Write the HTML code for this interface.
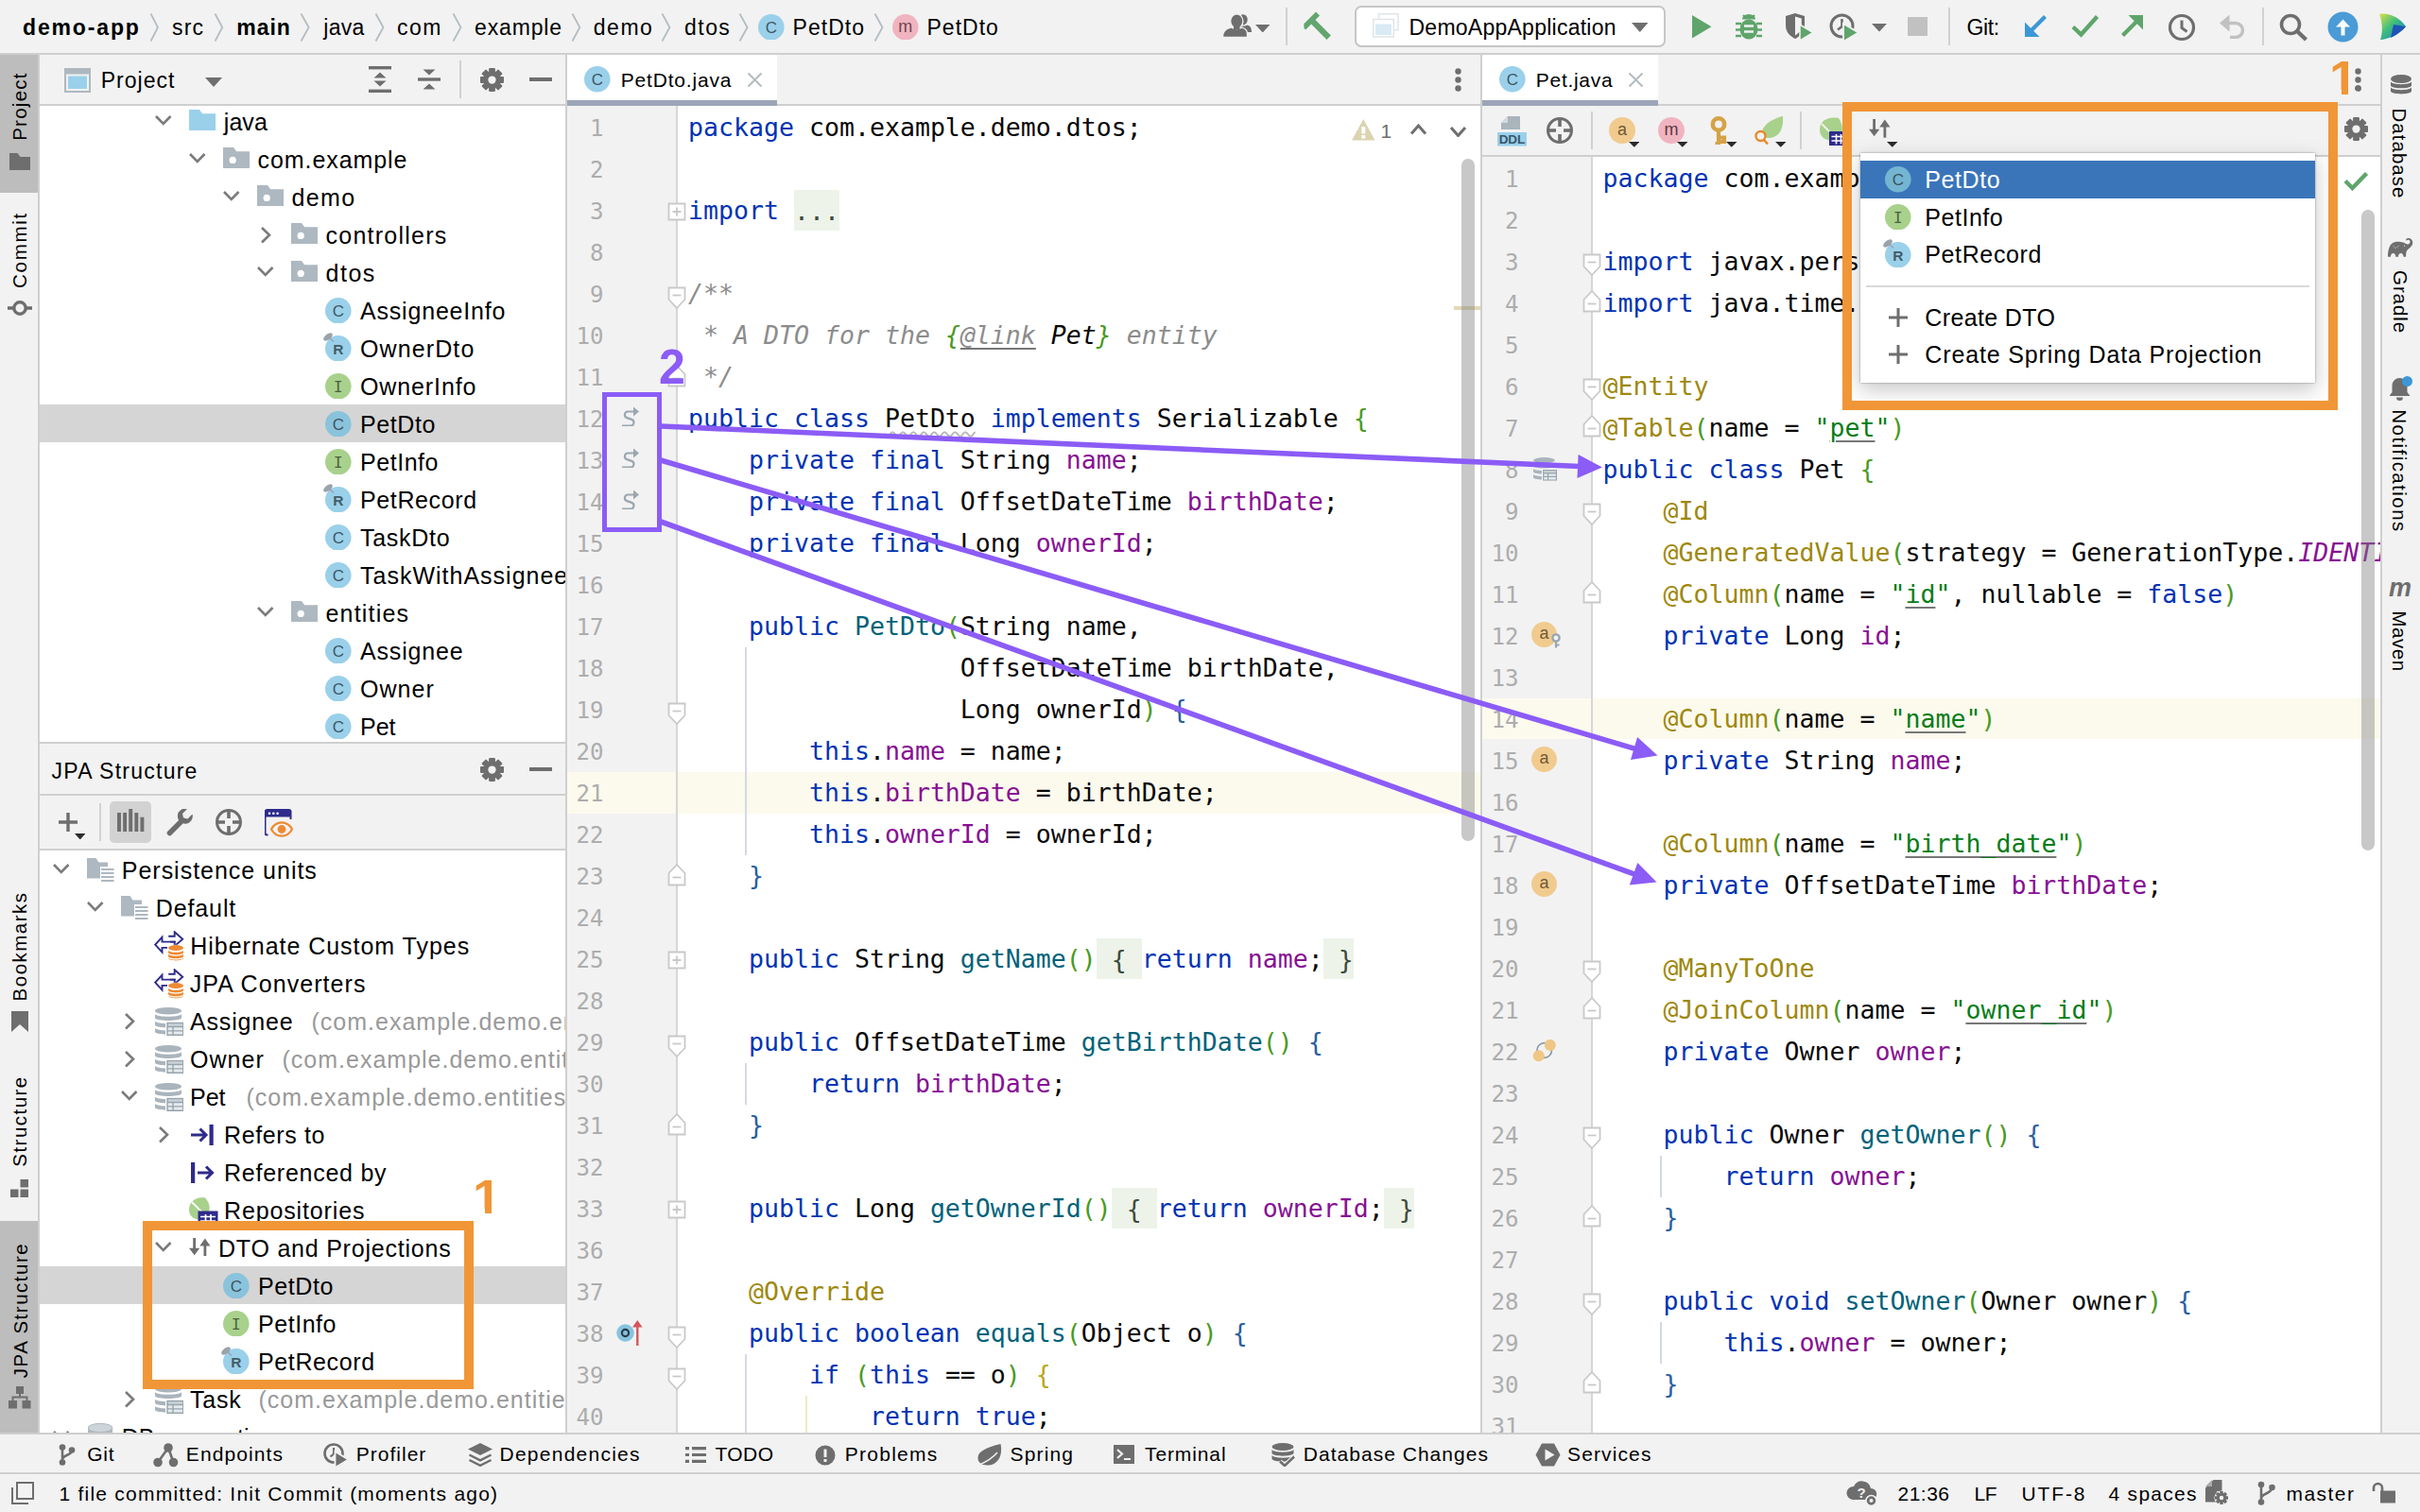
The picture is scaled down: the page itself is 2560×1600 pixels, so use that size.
<!DOCTYPE html><html><head><meta charset="utf-8"><title>IDE</title><style>html,body{margin:0;padding:0}html{background:#f2f2f2}body{width:2560px;height:1600px;overflow:hidden;background:#f2f2f2;position:relative;font-family:"Liberation Sans",sans-serif;font-kerning:normal}body div,body svg{position:absolute;box-sizing:border-box}body div span{position:static}.cl{font-family:"DejaVu Sans Mono","Liberation Mono",monospace;font-size:26.576px;height:44px;line-height:44px;white-space:pre;color:#080808}.ln{font-family:"DejaVu Sans Mono","Liberation Mono",monospace;font-size:24.1px;height:44px;line-height:44px;white-space:pre;color:#adadad;text-align:right;width:60px}.k{color:#0033b3}.a{color:#9e880d}.s{color:#067d17}.f{color:#871094}.m{color:#00627a}.c{color:#8c8c8c;font-style:italic}.g{color:#4a9a1f}.b{color:#265ea0}.y{color:#b9a61c}.u{text-decoration:underline;text-decoration-thickness:1.6px;text-underline-offset:4px;text-decoration-color:#777}.fo{background:#edf3e9;color:#3d4a3d;padding:6.500px 0 6px}</style></head><body><div style="left:0px;top:56px;width:2560px;height:2px;background:#cfcfcf;"></div>
<div style="left:0px;top:58px;width:40px;height:146px;background:#bdbdbd;"></div>
<div style="left:0px;top:1292px;width:40px;height:224px;background:#bdbdbd;"></div>
<div style="left:40px;top:58px;width:2px;height:1458px;background:#cfcfcf;"></div>
<div style="left:42px;top:110px;width:556px;height:2px;background:#cfcfcf;"></div>
<div style="left:42px;top:112px;width:556px;height:674px;background:#fff;"></div>
<div style="left:42px;top:428px;width:556px;height:40px;background:#d5d5d5;"></div>
<div style="left:42px;top:785px;width:556px;height:2px;background:#cfcfcf;"></div>
<div style="left:42px;top:840px;width:556px;height:2px;background:#cfcfcf;"></div>
<div style="left:42px;top:898px;width:556px;height:2px;background:#cfcfcf;"></div>
<div style="left:42px;top:900px;width:556px;height:616px;background:#fff;"></div>
<div style="left:42px;top:1340px;width:556px;height:40px;background:#d5d5d5;"></div>
<div style="left:598px;top:58px;width:2px;height:1458px;background:#cfcfcf;"></div>
<div style="left:600px;top:110px;width:966px;height:2px;background:#cfcfcf;"></div>
<div style="left:600px;top:58px;width:222px;height:48px;background:#fff;"></div>
<div style="left:600px;top:106px;width:222px;height:6px;background:#9ca6b8;"></div>
<div style="left:600px;top:112px;width:116px;height:1404px;background:#f2f2f2;"></div>
<div style="left:716px;top:112px;width:850px;height:1404px;background:#fff;"></div>
<div style="left:600px;top:817.4px;width:966px;height:43.6px;background:#fcfaed;"></div>
<div style="left:715px;top:112px;width:2px;height:1404px;background:#d6d6d6;"></div>
<div style="left:1566px;top:58px;width:2px;height:1458px;background:#cfcfcf;"></div>
<div style="left:1568px;top:110px;width:950px;height:2px;background:#cfcfcf;"></div>
<div style="left:1568px;top:58px;width:186px;height:48px;background:#fff;"></div>
<div style="left:1568px;top:106px;width:186px;height:6px;background:#9ca6b8;"></div>
<div style="left:1568px;top:164px;width:950px;height:2px;background:#cfcfcf;"></div>
<div style="left:1568px;top:166px;width:116px;height:1350px;background:#f2f2f2;"></div>
<div style="left:1684px;top:166px;width:834px;height:1350px;background:#fff;"></div>
<div style="left:1568px;top:738.5px;width:950px;height:43.5px;background:#fcfaed;"></div>
<div style="left:1683px;top:166px;width:2px;height:1350px;background:#d6d6d6;"></div>
<div style="left:2518px;top:58px;width:2px;height:1458px;background:#cfcfcf;"></div>
<div style="left:0px;top:1516px;width:2560px;height:2px;background:#cfcfcf;"></div>
<div style="left:0px;top:1558px;width:2560px;height:2px;background:#cfcfcf;"></div>
<div style="left:600px;top:112px;width:966px;height:1404px;overflow:hidden">
<div class="ln" style="left:-21.5px;top:2.2px">1</div>
<div class="cl" style="left:128px;top:1.2px"><span class="k">package</span> com.example.demo.dtos;</div>
<div class="ln" style="left:-21.5px;top:46.2px">2</div>
<div class="ln" style="left:-21.5px;top:90.2px">3</div>
<div class="cl" style="left:128px;top:89.2px"><span class="k">import</span> <span class="fo">...</span></div>
<div class="ln" style="left:-21.5px;top:134.2px">8</div>
<div class="ln" style="left:-21.5px;top:178.2px">9</div>
<div class="cl" style="left:128px;top:177.2px"><span class="c">/**</span></div>
<div class="ln" style="left:-21.5px;top:222.2px">10</div>
<div class="cl" style="left:128px;top:221.2px"><span class="c"> * A DTO for the </span><span class="g" style="font-style:italic">{</span><span class="c u">@link</span><span style="font-style:italic"> Pet</span><span class="g" style="font-style:italic">}</span><span class="c"> entity</span></div>
<div class="ln" style="left:-21.5px;top:266.2px">11</div>
<div class="cl" style="left:128px;top:265.2px"><span class="c"> */</span></div>
<div class="ln" style="left:-21.5px;top:310.2px">12</div>
<div class="cl" style="left:128px;top:309.2px"><span class="k">public class</span> <span style="text-decoration:underline wavy #b8b8b8 1.5px;text-underline-offset:3.5px">PetDto</span> <span class="k">implements</span> Serializable <span class="g">{</span></div>
<div class="ln" style="left:-21.5px;top:354.2px">13</div>
<div class="cl" style="left:128px;top:353.2px">    <span class="k">private final</span> String <span class="f">name</span>;</div>
<div class="ln" style="left:-21.5px;top:398.2px">14</div>
<div class="cl" style="left:128px;top:397.2px">    <span class="k">private final</span> OffsetDateTime <span class="f">birthDate</span>;</div>
<div class="ln" style="left:-21.5px;top:442.2px">15</div>
<div class="cl" style="left:128px;top:441.2px">    <span class="k">private final</span> Long <span class="f">ownerId</span>;</div>
<div class="ln" style="left:-21.5px;top:486.2px">16</div>
<div class="ln" style="left:-21.5px;top:530.2px">17</div>
<div class="cl" style="left:128px;top:529.2px">    <span class="k">public</span> <span class="m">PetDto</span><span class="g">(</span>String name,</div>
<div class="ln" style="left:-21.5px;top:574.2px">18</div>
<div class="cl" style="left:128px;top:573.2px">                  OffsetDateTime birthDate,</div>
<div class="ln" style="left:-21.5px;top:618.2px">19</div>
<div class="cl" style="left:128px;top:617.2px">                  Long ownerId<span class="g">)</span> <span class="b">{</span></div>
<div class="ln" style="left:-21.5px;top:662.2px">20</div>
<div class="cl" style="left:128px;top:661.2px">        <span class="k">this</span>.<span class="f">name</span> = name;</div>
<div class="ln" style="left:-21.5px;top:706.2px">21</div>
<div class="cl" style="left:128px;top:705.2px">        <span class="k">this</span>.<span class="f">birthDate</span> = birthDate;</div>
<div class="ln" style="left:-21.5px;top:750.2px">22</div>
<div class="cl" style="left:128px;top:749.2px">        <span class="k">this</span>.<span class="f">ownerId</span> = ownerId;</div>
<div class="ln" style="left:-21.5px;top:794.2px">23</div>
<div class="cl" style="left:128px;top:793.2px">    <span class="b">}</span></div>
<div class="ln" style="left:-21.5px;top:838.2px">24</div>
<div class="ln" style="left:-21.5px;top:882.2px">25</div>
<div class="cl" style="left:128px;top:881.2px">    <span class="k">public</span> String <span class="m">getName</span><span class="g">()</span><span class="fo"> { </span><span class="k">return</span> <span class="f">name</span>;<span class="fo"> }</span></div>
<div class="ln" style="left:-21.5px;top:926.2px">28</div>
<div class="ln" style="left:-21.5px;top:970.2px">29</div>
<div class="cl" style="left:128px;top:969.2px">    <span class="k">public</span> OffsetDateTime <span class="m">getBirthDate</span><span class="g">()</span> <span class="b">{</span></div>
<div class="ln" style="left:-21.5px;top:1014.2px">30</div>
<div class="cl" style="left:128px;top:1013.2px">        <span class="k">return</span> <span class="f">birthDate</span>;</div>
<div class="ln" style="left:-21.5px;top:1058.2px">31</div>
<div class="cl" style="left:128px;top:1057.2px">    <span class="b">}</span></div>
<div class="ln" style="left:-21.5px;top:1102.2px">32</div>
<div class="ln" style="left:-21.5px;top:1146.2px">33</div>
<div class="cl" style="left:128px;top:1145.2px">    <span class="k">public</span> Long <span class="m">getOwnerId</span><span class="g">()</span><span class="fo"> { </span><span class="k">return</span> <span class="f">ownerId</span>;<span class="fo"> }</span></div>
<div class="ln" style="left:-21.5px;top:1190.2px">36</div>
<div class="ln" style="left:-21.5px;top:1234.2px">37</div>
<div class="cl" style="left:128px;top:1233.2px">    <span class="a">@Override</span></div>
<div class="ln" style="left:-21.5px;top:1278.2px">38</div>
<div class="cl" style="left:128px;top:1277.2px">    <span class="k">public boolean</span> <span class="m">equals</span><span class="g">(</span>Object o<span class="g">)</span> <span class="b">{</span></div>
<div class="ln" style="left:-21.5px;top:1322.2px">39</div>
<div class="cl" style="left:128px;top:1321.2px">        <span class="k">if</span> <span class="g">(</span><span class="k">this</span> == o<span class="g">)</span> <span class="y">{</span></div>
<div class="ln" style="left:-21.5px;top:1366.2px">40</div>
<div class="cl" style="left:128px;top:1365.2px">            <span class="k">return true</span>;</div>
<div style="left:187.6px;top:573.4px;width:2px;height:220px;background:#d3d9e6"></div>
<div style="left:187.6px;top:1013.4px;width:2px;height:44px;background:#d3d9e6"></div>
<div style="left:187.6px;top:1321.4px;width:2px;height:88px;background:#d3d9e6"></div>
<div style="left:252px;top:1365.4px;width:2px;height:44px;background:#efe9c2"></div>
</div>
<div style="left:1568px;top:166px;width:950px;height:1350px;overflow:hidden">
<div class="ln" style="left:-21.5px;top:1.8px">1</div>
<div class="cl" style="left:127.6px;top:0.8px"><span class="k">package</span> com.example.demo.entities;</div>
<div class="ln" style="left:-21.5px;top:45.8px">2</div>
<div class="ln" style="left:-21.5px;top:89.8px">3</div>
<div class="cl" style="left:127.6px;top:88.8px"><span class="k">import</span> javax.persistence.*;</div>
<div class="ln" style="left:-21.5px;top:133.8px">4</div>
<div class="cl" style="left:127.6px;top:132.8px"><span class="k">import</span> java.time.OffsetDateTime;</div>
<div class="ln" style="left:-21.5px;top:177.8px">5</div>
<div class="ln" style="left:-21.5px;top:221.8px">6</div>
<div class="cl" style="left:127.6px;top:220.8px"><span class="a">@Entity</span></div>
<div class="ln" style="left:-21.5px;top:265.8px">7</div>
<div class="cl" style="left:127.6px;top:264.8px"><span class="a">@Table</span><span class="g">(</span>name = <span class="s">"<span class="u">pet</span>"</span><span class="g">)</span></div>
<div class="ln" style="left:-21.5px;top:309.8px">8</div>
<div class="cl" style="left:127.6px;top:308.8px"><span class="k">public class</span> Pet <span class="g">{</span></div>
<div class="ln" style="left:-21.5px;top:353.8px">9</div>
<div class="cl" style="left:127.6px;top:352.8px">    <span class="a">@Id</span></div>
<div class="ln" style="left:-21.5px;top:397.8px">10</div>
<div class="cl" style="left:127.6px;top:396.8px">    <span class="a">@GeneratedValue</span><span class="g">(</span>strategy = GenerationType.<span class="f" style="font-style:italic">IDENTITY</span><span class="g">)</span></div>
<div class="ln" style="left:-21.5px;top:441.8px">11</div>
<div class="cl" style="left:127.6px;top:440.8px">    <span class="a">@Column</span><span class="g">(</span>name = <span class="s">"<span class="u">id</span>"</span>, nullable = <span class="k">false</span><span class="g">)</span></div>
<div class="ln" style="left:-21.5px;top:485.8px">12</div>
<div class="cl" style="left:127.6px;top:484.8px">    <span class="k">private</span> Long <span class="f">id</span>;</div>
<div class="ln" style="left:-21.5px;top:529.8px">13</div>
<div class="ln" style="left:-21.5px;top:573.8px">14</div>
<div class="cl" style="left:127.6px;top:572.8px">    <span class="a">@Column</span><span class="g">(</span>name = <span class="s">"<span class="u">name</span>"</span><span class="g">)</span></div>
<div class="ln" style="left:-21.5px;top:617.8px">15</div>
<div class="cl" style="left:127.6px;top:616.8px">    <span class="k">private</span> String <span class="f">name</span>;</div>
<div class="ln" style="left:-21.5px;top:661.8px">16</div>
<div class="ln" style="left:-21.5px;top:705.8px">17</div>
<div class="cl" style="left:127.6px;top:704.8px">    <span class="a">@Column</span><span class="g">(</span>name = <span class="s">"<span class="u">birth_date</span>"</span><span class="g">)</span></div>
<div class="ln" style="left:-21.5px;top:749.8px">18</div>
<div class="cl" style="left:127.6px;top:748.8px">    <span class="k">private</span> OffsetDateTime <span class="f">birthDate</span>;</div>
<div class="ln" style="left:-21.5px;top:793.8px">19</div>
<div class="ln" style="left:-21.5px;top:837.8px">20</div>
<div class="cl" style="left:127.6px;top:836.8px">    <span class="a">@ManyToOne</span></div>
<div class="ln" style="left:-21.5px;top:881.8px">21</div>
<div class="cl" style="left:127.6px;top:880.8px">    <span class="a">@JoinColumn</span><span class="g">(</span>name = <span class="s">"<span class="u">owner_id</span>"</span><span class="g">)</span></div>
<div class="ln" style="left:-21.5px;top:925.8px">22</div>
<div class="cl" style="left:127.6px;top:924.8px">    <span class="k">private</span> Owner <span class="f">owner</span>;</div>
<div class="ln" style="left:-21.5px;top:969.8px">23</div>
<div class="ln" style="left:-21.5px;top:1013.8px">24</div>
<div class="cl" style="left:127.6px;top:1012.8px">    <span class="k">public</span> Owner <span class="m">getOwner</span><span class="g">()</span> <span class="b">{</span></div>
<div class="ln" style="left:-21.5px;top:1057.8px">25</div>
<div class="cl" style="left:127.6px;top:1056.8px">        <span class="k">return</span> <span class="f">owner</span>;</div>
<div class="ln" style="left:-21.5px;top:1101.8px">26</div>
<div class="cl" style="left:127.6px;top:1100.8px">    <span class="b">}</span></div>
<div class="ln" style="left:-21.5px;top:1145.8px">27</div>
<div class="ln" style="left:-21.5px;top:1189.8px">28</div>
<div class="cl" style="left:127.6px;top:1188.8px">    <span class="k">public void</span> <span class="m">setOwner</span><span class="g">(</span>Owner owner<span class="g">)</span> <span class="b">{</span></div>
<div class="ln" style="left:-21.5px;top:1233.8px">29</div>
<div class="cl" style="left:127.6px;top:1232.8px">        <span class="k">this</span>.<span class="f">owner</span> = owner;</div>
<div class="ln" style="left:-21.5px;top:1277.8px">30</div>
<div class="cl" style="left:127.6px;top:1276.8px">    <span class="b">}</span></div>
<div class="ln" style="left:-21.5px;top:1321.8px">31</div>
<div style="left:187.8px;top:1057px;width:2px;height:44px;background:#d3d9e6"></div>
<div style="left:187.8px;top:1233px;width:2px;height:44px;background:#d3d9e6"></div>
</div>
<svg style="left:706px;top:214.4px;" width="20" height="20" viewBox="0 0 20 20"><path d="M1.5 1.5h17v17h-17z" fill="#fff" stroke="#c9c9c9" stroke-width="1.8"/><path d="M5.5 10h9M10 5.5v9" stroke="#c9c9c9" stroke-width="1.8"/></svg>
<svg style="left:706px;top:1006.4px;" width="20" height="20" viewBox="0 0 20 20"><path d="M1.5 1.5h17v17h-17z" fill="#fff" stroke="#c9c9c9" stroke-width="1.8"/><path d="M5.5 10h9M10 5.5v9" stroke="#c9c9c9" stroke-width="1.8"/></svg>
<svg style="left:706px;top:1270.4px;" width="20" height="20" viewBox="0 0 20 20"><path d="M1.5 1.5h17v17h-17z" fill="#fff" stroke="#c9c9c9" stroke-width="1.8"/><path d="M5.5 10h9M10 5.5v9" stroke="#c9c9c9" stroke-width="1.8"/></svg>
<svg style="left:706px;top:302.7px;" width="20" height="25" viewBox="0 0 20 25"><path d="M1.5 1.5h17v12.500l-8.500 9l-8.500-9z" fill="#fff" stroke="#c9c9c9" stroke-width="1.8"/><path d="M5.5 9.5h9" stroke="#c9c9c9" stroke-width="1.8"/></svg>
<svg style="left:706px;top:742.7px;" width="20" height="25" viewBox="0 0 20 25"><path d="M1.5 1.5h17v12.500l-8.500 9l-8.500-9z" fill="#fff" stroke="#c9c9c9" stroke-width="1.8"/><path d="M5.5 9.5h9" stroke="#c9c9c9" stroke-width="1.8"/></svg>
<svg style="left:706px;top:1094.7px;" width="20" height="25" viewBox="0 0 20 25"><path d="M1.5 1.5h17v12.500l-8.500 9l-8.500-9z" fill="#fff" stroke="#c9c9c9" stroke-width="1.8"/><path d="M5.5 9.5h9" stroke="#c9c9c9" stroke-width="1.8"/></svg>
<svg style="left:706px;top:1402.7px;" width="20" height="25" viewBox="0 0 20 25"><path d="M1.5 1.5h17v12.500l-8.500 9l-8.500-9z" fill="#fff" stroke="#c9c9c9" stroke-width="1.8"/><path d="M5.5 9.5h9" stroke="#c9c9c9" stroke-width="1.8"/></svg>
<svg style="left:706px;top:1446.7px;" width="20" height="25" viewBox="0 0 20 25"><path d="M1.5 1.5h17v12.500l-8.500 9l-8.500-9z" fill="#fff" stroke="#c9c9c9" stroke-width="1.8"/><path d="M5.5 9.5h9" stroke="#c9c9c9" stroke-width="1.8"/></svg>
<svg style="left:706px;top:384.6px;" width="20" height="25" viewBox="0 0 20 25"><path d="M1.5 23.5h17v-12.500l-8.500-9l-8.500 9z" fill="#fff" stroke="#c9c9c9" stroke-width="1.8"/><path d="M5.5 15.500h9" stroke="#c9c9c9" stroke-width="1.8"/></svg>
<svg style="left:706px;top:912.6px;" width="20" height="25" viewBox="0 0 20 25"><path d="M1.5 23.5h17v-12.500l-8.500-9l-8.500 9z" fill="#fff" stroke="#c9c9c9" stroke-width="1.8"/><path d="M5.5 15.500h9" stroke="#c9c9c9" stroke-width="1.8"/></svg>
<svg style="left:706px;top:1176.6px;" width="20" height="25" viewBox="0 0 20 25"><path d="M1.5 23.5h17v-12.500l-8.500-9l-8.500 9z" fill="#fff" stroke="#c9c9c9" stroke-width="1.8"/><path d="M5.5 15.500h9" stroke="#c9c9c9" stroke-width="1.8"/></svg>
<svg style="left:1674px;top:268.3px;" width="20" height="25" viewBox="0 0 20 25"><path d="M1.5 1.5h17v12.500l-8.500 9l-8.500-9z" fill="#fff" stroke="#c9c9c9" stroke-width="1.8"/><path d="M5.5 9.5h9" stroke="#c9c9c9" stroke-width="1.8"/></svg>
<svg style="left:1674px;top:400.3px;" width="20" height="25" viewBox="0 0 20 25"><path d="M1.5 1.5h17v12.500l-8.500 9l-8.500-9z" fill="#fff" stroke="#c9c9c9" stroke-width="1.8"/><path d="M5.5 9.5h9" stroke="#c9c9c9" stroke-width="1.8"/></svg>
<svg style="left:1674px;top:532.3px;" width="20" height="25" viewBox="0 0 20 25"><path d="M1.5 1.5h17v12.500l-8.500 9l-8.500-9z" fill="#fff" stroke="#c9c9c9" stroke-width="1.8"/><path d="M5.5 9.5h9" stroke="#c9c9c9" stroke-width="1.8"/></svg>
<svg style="left:1674px;top:1016.3px;" width="20" height="25" viewBox="0 0 20 25"><path d="M1.5 1.5h17v12.500l-8.500 9l-8.500-9z" fill="#fff" stroke="#c9c9c9" stroke-width="1.8"/><path d="M5.5 9.5h9" stroke="#c9c9c9" stroke-width="1.8"/></svg>
<svg style="left:1674px;top:1192.3px;" width="20" height="25" viewBox="0 0 20 25"><path d="M1.5 1.5h17v12.500l-8.500 9l-8.500-9z" fill="#fff" stroke="#c9c9c9" stroke-width="1.8"/><path d="M5.5 9.5h9" stroke="#c9c9c9" stroke-width="1.8"/></svg>
<svg style="left:1674px;top:1368.3px;" width="20" height="25" viewBox="0 0 20 25"><path d="M1.5 1.5h17v12.500l-8.500 9l-8.500-9z" fill="#fff" stroke="#c9c9c9" stroke-width="1.8"/><path d="M5.5 9.5h9" stroke="#c9c9c9" stroke-width="1.8"/></svg>
<svg style="left:1674px;top:306.2px;" width="20" height="25" viewBox="0 0 20 25"><path d="M1.5 23.5h17v-12.500l-8.500-9l-8.500 9z" fill="#fff" stroke="#c9c9c9" stroke-width="1.8"/><path d="M5.5 15.500h9" stroke="#c9c9c9" stroke-width="1.8"/></svg>
<svg style="left:1674px;top:438.2px;" width="20" height="25" viewBox="0 0 20 25"><path d="M1.5 23.5h17v-12.500l-8.500-9l-8.500 9z" fill="#fff" stroke="#c9c9c9" stroke-width="1.8"/><path d="M5.5 15.500h9" stroke="#c9c9c9" stroke-width="1.8"/></svg>
<svg style="left:1674px;top:614.2px;" width="20" height="25" viewBox="0 0 20 25"><path d="M1.5 23.5h17v-12.500l-8.500-9l-8.500 9z" fill="#fff" stroke="#c9c9c9" stroke-width="1.8"/><path d="M5.5 15.500h9" stroke="#c9c9c9" stroke-width="1.8"/></svg>
<svg style="left:1674px;top:1054.2px;" width="20" height="25" viewBox="0 0 20 25"><path d="M1.5 23.5h17v-12.500l-8.500-9l-8.500 9z" fill="#fff" stroke="#c9c9c9" stroke-width="1.8"/><path d="M5.5 15.500h9" stroke="#c9c9c9" stroke-width="1.8"/></svg>
<svg style="left:1674px;top:1274.2px;" width="20" height="25" viewBox="0 0 20 25"><path d="M1.5 23.5h17v-12.500l-8.500-9l-8.500 9z" fill="#fff" stroke="#c9c9c9" stroke-width="1.8"/><path d="M5.5 15.500h9" stroke="#c9c9c9" stroke-width="1.8"/></svg>
<svg style="left:1674px;top:1450.2px;" width="20" height="25" viewBox="0 0 20 25"><path d="M1.5 23.5h17v-12.500l-8.500-9l-8.500 9z" fill="#fff" stroke="#c9c9c9" stroke-width="1.8"/><path d="M5.5 15.500h9" stroke="#c9c9c9" stroke-width="1.8"/></svg>
<svg style="left:657px;top:429.4px;" width="20" height="22" viewBox="0 0 20 22"><path d="M13.500 6.500H7.200a3.400 3.400 0 0 0-1 6.600l5 1.800a3.400 3.400 0 0 1-1 6.600H1" fill="none" stroke="#9aa7b0" stroke-width="2.200"/><path d="M13 1.500l6 5l-6 5z" fill="#9aa7b0"/></svg>
<svg style="left:657px;top:473.4px;" width="20" height="22" viewBox="0 0 20 22"><path d="M13.500 6.500H7.200a3.400 3.400 0 0 0-1 6.600l5 1.800a3.400 3.400 0 0 1-1 6.600H1" fill="none" stroke="#9aa7b0" stroke-width="2.200"/><path d="M13 1.500l6 5l-6 5z" fill="#9aa7b0"/></svg>
<svg style="left:657px;top:517.4px;" width="20" height="22" viewBox="0 0 20 22"><path d="M13.500 6.500H7.200a3.400 3.400 0 0 0-1 6.600l5 1.800a3.400 3.400 0 0 1-1 6.600H1" fill="none" stroke="#9aa7b0" stroke-width="2.200"/><path d="M13 1.500l6 5l-6 5z" fill="#9aa7b0"/></svg>
<svg style="left:651.8px;top:1395.9px;" width="30" height="28" viewBox="0 0 30 28"><circle cx="9.500" cy="14.500" r="9.300" fill="#85c3e0"/><circle cx="9.500" cy="14.500" r="3.600" fill="none" stroke="#2b3b46" stroke-width="2.200"/><path d="M22.300 28V7" stroke="#d4565c" stroke-width="2.400"/><path d="M17 8.500l5.300-7.500l5.300 7.500z" fill="#d4565c"/></svg>
<svg style="left:1622px;top:484.3px;" width="25.01" height="24.6" viewBox="0 0 30.5 30" preserveAspectRatio="none"><ellipse cx="14" cy="3.800" rx="14" ry="3.800" fill="#aab4bc"/><path d="M0 7.300c2 3.300 26 3.300 28 0v4.200c-2 3.300-26 3.300-28 0zM0 14.700c2 3.300 26 3.300 28 0v4.200c-2 3.300-26 3.300-28 0zM0 22.100c2 3.300 26 3.300 28 0v4.200c-2 3.300-26 3.300-28 0z" fill="#aab4bc"/><rect x="11" y="14.600" width="19.500" height="15.400" fill="#fff"/><rect x="12.300" y="15.800" width="18.200" height="14.200" fill="#97a4ad"/><rect x="13.700" y="17.200" width="15.400" height="2.600" fill="#c9d1d6"/><path d="M13.700 21.200h4.600v3h-4.600zM19.700 21.200h9.400v3h-9.400zM13.700 25.600h4.600v3h-4.600zM19.700 25.600h9.400v3h-9.400z" fill="#e6eaed"/></svg>
<svg style="left:1620px;top:658px;" width="27" height="27" viewBox="0 0 27 27"><circle cx="13.5" cy="13.5" r="13.5" fill="#f1cb8e"/><text x="13.5" y="12.3" text-anchor="middle" dominant-baseline="central" font-family='"Liberation Sans",sans-serif' font-size="18" font-weight="400" fill="#5c4a2c" fill-opacity="0.9">a</text></svg>
<svg style="left:1639.5px;top:669.5px;" width="12" height="16" viewBox="0 0 12 16"><circle cx="6" cy="5" r="3.600" fill="#f2f2f2" stroke="#9aa7b0" stroke-width="2.400"/><path d="M6 8.500v7M6 12.500h3.500" stroke="#9aa7b0" stroke-width="2.200" fill="none"/></svg>
<svg style="left:1620px;top:790px;" width="27" height="27" viewBox="0 0 27 27"><circle cx="13.5" cy="13.5" r="13.5" fill="#f1cb8e"/><text x="13.5" y="12.3" text-anchor="middle" dominant-baseline="central" font-family='"Liberation Sans",sans-serif' font-size="18" font-weight="400" fill="#5c4a2c" fill-opacity="0.9">a</text></svg>
<svg style="left:1620px;top:922px;" width="27" height="27" viewBox="0 0 27 27"><circle cx="13.5" cy="13.5" r="13.5" fill="#f1cb8e"/><text x="13.5" y="12.3" text-anchor="middle" dominant-baseline="central" font-family='"Liberation Sans",sans-serif' font-size="18" font-weight="400" fill="#5c4a2c" fill-opacity="0.9">a</text></svg>
<svg style="left:1620px;top:1100px;" width="28" height="26" viewBox="0 0 28 26"><circle cx="13.700" cy="11.500" r="7.800" fill="none" stroke="#8a9aa5" stroke-width="1.700"/><circle cx="19.800" cy="5.900" r="6" fill="#f0c684"/><circle cx="7.700" cy="17.300" r="6" fill="#f0c684"/></svg>
<div style="left:24.00px;top:12.90px;height:32px;line-height:32px;font-size:23px;color:#000;white-space:pre;letter-spacing:1.86px;font-weight:700;">demo-app</div>
<svg style="left:157.5px;top:13px;" width="11" height="32" viewBox="0 0 11 32"><path d="M1.5 1.500L9 16L1.500 30.500" fill="none" stroke="#b4bcc1" stroke-width="1.8"/></svg>
<div style="left:182.00px;top:12.90px;height:32px;line-height:32px;font-size:23px;color:#000;white-space:pre;letter-spacing:1.18px;">src</div>
<svg style="left:226px;top:13px;" width="11.2" height="32" viewBox="0 0 11.2 32"><path d="M1.5 1.500L9.2 16L1.500 30.500" fill="none" stroke="#b4bcc1" stroke-width="1.8"/></svg>
<div style="left:250.30px;top:12.90px;height:32px;line-height:32px;font-size:23px;color:#000;white-space:pre;letter-spacing:0.95px;font-weight:700;">main</div>
<svg style="left:317.4px;top:13px;" width="11.6" height="32" viewBox="0 0 11.6 32"><path d="M1.5 1.500L9.6 16L1.500 30.500" fill="none" stroke="#b4bcc1" stroke-width="1.8"/></svg>
<div style="left:342.25px;top:12.90px;height:32px;line-height:32px;font-size:23px;color:#000;white-space:pre;letter-spacing:0.32px;">java</div>
<svg style="left:395.5px;top:13px;" width="11.5" height="32" viewBox="0 0 11.5 32"><path d="M1.5 1.500L9.5 16L1.500 30.500" fill="none" stroke="#b4bcc1" stroke-width="1.8"/></svg>
<div style="left:420.10px;top:12.90px;height:32px;line-height:32px;font-size:23px;color:#000;white-space:pre;letter-spacing:1.45px;">com</div>
<svg style="left:477.5px;top:13px;" width="11.5" height="32" viewBox="0 0 11.5 32"><path d="M1.5 1.500L9.5 16L1.500 30.500" fill="none" stroke="#b4bcc1" stroke-width="1.8"/></svg>
<div style="left:502.10px;top:12.90px;height:32px;line-height:32px;font-size:23px;color:#000;white-space:pre;letter-spacing:0.83px;">example</div>
<svg style="left:603.5px;top:13px;" width="11.3" height="32" viewBox="0 0 11.3 32"><path d="M1.5 1.500L9.3 16L1.500 30.500" fill="none" stroke="#b4bcc1" stroke-width="1.8"/></svg>
<div style="left:627.80px;top:12.90px;height:32px;line-height:32px;font-size:23px;color:#000;white-space:pre;letter-spacing:1.50px;">demo</div>
<svg style="left:699.2px;top:13px;" width="11.4" height="32" viewBox="0 0 11.4 32"><path d="M1.5 1.500L9.4 16L1.500 30.500" fill="none" stroke="#b4bcc1" stroke-width="1.8"/></svg>
<div style="left:724.10px;top:12.90px;height:32px;line-height:32px;font-size:23px;color:#000;white-space:pre;letter-spacing:1.43px;">dtos</div>
<svg style="left:781.4px;top:13px;" width="11.6" height="32" viewBox="0 0 11.6 32"><path d="M1.5 1.500L9.6 16L1.500 30.500" fill="none" stroke="#b4bcc1" stroke-width="1.8"/></svg>
<svg style="left:802px;top:14.5px;" width="27.6" height="27.6" viewBox="0 0 27.6 27.6"><circle cx="13.8" cy="13.8" r="13.8" fill="#9ad0ea"/><text x="13.8" y="14.100000000000001" text-anchor="middle" dominant-baseline="central" font-family='"Liberation Sans",sans-serif' font-size="17" font-weight="400" fill="#33464f" fill-opacity="0.9">C</text></svg>
<div style="left:838.50px;top:12.90px;height:32px;line-height:32px;font-size:23px;color:#000;white-space:pre;letter-spacing:1.05px;">PetDto</div>
<svg style="left:924px;top:13px;" width="11.5" height="32" viewBox="0 0 11.5 32"><path d="M1.5 1.500L9.5 16L1.500 30.500" fill="none" stroke="#b4bcc1" stroke-width="1.8"/></svg>
<svg style="left:944.2px;top:14.5px;" width="27.6" height="27.6" viewBox="0 0 27.6 27.6"><circle cx="13.8" cy="13.8" r="13.8" fill="#f0b4c0"/><text x="13.8" y="12.600000000000001" text-anchor="middle" dominant-baseline="central" font-family='"Liberation Sans",sans-serif' font-size="18" font-weight="400" fill="#5b3540" fill-opacity="0.9">m</text></svg>
<div style="left:980.50px;top:12.90px;height:32px;line-height:32px;font-size:23px;color:#000;white-space:pre;letter-spacing:1.01px;">PetDto</div>
<svg style="left:1293px;top:14px;" width="31" height="26" viewBox="0 0 31 26"><ellipse cx="22" cy="6.800" rx="4.700" ry="5.600" fill="#6e6e6e"/><path d="M17 13c2.500 1 7 1 9.500-0.500c3.500 1 4.500 3.500 4.500 7.500H17z" fill="#6e6e6e"/><ellipse cx="15.300" cy="8.400" rx="6.600" ry="7.500" fill="#6e6e6e" stroke="#f2f2f2" stroke-width="1.300"/><path d="M0.500 25.500c0-6 2-8.500 9-10.500c3 2 8.500 2 11.500 0c6 2 5.500 5.500 5.500 10.500z" fill="#6e6e6e" stroke="#f2f2f2" stroke-width="1.300"/><rect x="12" y="12" width="6.500" height="5" fill="#6e6e6e"/></svg>
<svg style="left:1327.75px;top:25.75px;" width="15.5" height="8.5" viewBox="0 0 15.5 8.5"><path d="M0 0h15.5l-7.75 8.5z" fill="#6e6e6e"/></svg>
<div style="left:1360px;top:8px;width:2px;height:40px;background:#d1d1d1;"></div>
<svg style="left:1372px;top:5px;" width="46" height="46" viewBox="0 0 46 46"><g transform="translate(15.300 16.300) rotate(-45)"><path d="M-11.500 0.500L-8.500 -2.800H9.500V2.800H-11.500z" fill="#62a66e"/><rect x="-3.100" y="0" width="6.200" height="26" fill="#62a66e"/></g></svg>
<div style="left:1432.5px;top:6px;width:329px;height:43.5px;background:#fff;border:2px solid #c6c6c6;border-radius:7px;"></div>
<svg style="left:1452px;top:14px;" width="28" height="26" viewBox="0 0 28 26"><rect x="6.500" y="0.750" width="20.500" height="17" fill="#fff" stroke="#dfe5ea" stroke-width="1.500"/><rect x="0.750" y="6.500" width="21.500" height="18.500" fill="#fff" stroke="#dfe5ea" stroke-width="1.500"/><rect x="3" y="11.500" width="17" height="11.500" fill="#d9eaf5"/></svg>
<div style="left:1490.50px;top:12.90px;height:32px;line-height:32px;font-size:23px;color:#000;white-space:pre;letter-spacing:0.25px;">DemoAppApplication</div>
<svg style="left:1725.55px;top:24px;" width="17.5" height="10" viewBox="0 0 17.5 10"><path d="M0 0h17.5l-8.75 10z" fill="#6e6e6e"/></svg>
<svg style="left:1790px;top:16px;" width="21" height="25" viewBox="0 0 21 25"><path d="M0 0l20.500 12.200L0 24.500z" fill="#5fa56b"/></svg>
<svg style="left:1836px;top:14px;" width="28" height="28" viewBox="0 0 28 28"><ellipse cx="14" cy="17" rx="9.500" ry="10.500" fill="#5fa56b"/><path d="M7 6.500a7 5.500 0 0 1 14 0z" fill="#5fa56b"/><path d="M8 2l3 3M20 2l-3 3" stroke="#5fa56b" stroke-width="2.200"/><path d="M0 11h6M0 17.500h5M0 24h6M28 11h-6M28 17.500h-5M28 24h-6" stroke="#5fa56b" stroke-width="2.600"/><path d="M9 13.500h10M9 19.500h10" stroke="#f2f2f2" stroke-width="2.400"/></svg>
<svg style="left:1887px;top:14px;" width="32" height="30" viewBox="0 0 32 30"><path d="M2 3l10-3l10 3v10c0 8-6 12-10 14C8 25 2 21 2 13z" fill="#6e6e6e"/><path d="M12 3.500v20c3-1.800 6.800-5 6.800-10.500V5.600z" fill="#f2f2f2"/><path d="M17 12l14 8.500L17 29z" fill="#5fa56b" stroke="#f2f2f2" stroke-width="1.500"/></svg>
<svg style="left:1935px;top:14px;" width="32" height="31" viewBox="0 0 32 31"><circle cx="13.500" cy="13.500" r="11.500" fill="none" stroke="#6e6e6e" stroke-width="3"/><path d="M13.500 6v8l-4.500 3.500" fill="none" stroke="#6e6e6e" stroke-width="2.600"/><path d="M15 11l16 9.500L15 30z" fill="#5fa56b" stroke="#f2f2f2" stroke-width="2"/></svg>
<svg style="left:1980.2px;top:25.25px;" width="16" height="8.5" viewBox="0 0 16 8.5"><path d="M0 0h16l-8 8.5z" fill="#6e6e6e"/></svg>
<div style="left:2018px;top:18px;width:20.5px;height:20px;background:#c1c1c1;"></div>
<div style="left:2060.5px;top:8px;width:2px;height:40px;background:#d1d1d1;"></div>
<div style="left:2080.50px;top:12.90px;height:32px;line-height:32px;font-size:23px;color:#000;white-space:pre;letter-spacing:-0.42px;">Git:</div>
<svg style="left:2141px;top:15px;" width="25" height="25" viewBox="0 0 25 25"><path d="M22.500 2.500L6 19" stroke="#3d97d6" stroke-width="4.200"/><path d="M1 24V8.500L16.500 24z" fill="#3d97d6"/></svg>
<svg style="left:2191px;top:15px;" width="30" height="25" viewBox="0 0 30 25"><path d="M2 13.500l8.500 8L27.500 2.500" fill="none" stroke="#5fa56b" stroke-width="4.400"/></svg>
<svg style="left:2243px;top:15px;" width="25" height="25" viewBox="0 0 25 25"><path d="M2.500 22.500L19 6" stroke="#5fa56b" stroke-width="4.200"/><path d="M24 1v15.500L8.500 1z" fill="#5fa56b"/></svg>
<svg style="left:2293px;top:13.5px;" width="30" height="30" viewBox="0 0 30 30"><circle cx="15" cy="15" r="12.500" fill="none" stroke="#6e6e6e" stroke-width="3.200"/><path d="M15 7.500v8l5.500 4" fill="none" stroke="#6e6e6e" stroke-width="3"/></svg>
<svg style="left:2348px;top:14px;" width="28" height="27" viewBox="0 0 28 27"><path d="M9.500 10.500H17a7.500 7.500 0 0 1 0 15H11" fill="none" stroke="#c1c1c1" stroke-width="3.400"/><path d="M0 10.500l10.500-9v18z" fill="#c1c1c1"/></svg>
<div style="left:2392.5px;top:8px;width:2px;height:40px;background:#d1d1d1;"></div>
<svg style="left:2411px;top:13.5px;" width="31" height="30" viewBox="0 0 31 30"><circle cx="12" cy="12" r="9.500" fill="none" stroke="#6e6e6e" stroke-width="3.600"/><path d="M18.500 18.500l10 9.500" stroke="#6e6e6e" stroke-width="4.400"/></svg>
<svg style="left:2462px;top:11.5px;" width="33" height="33" viewBox="0 0 33 33"><circle cx="16.500" cy="16.500" r="16" fill="#4b9bd6"/><path d="M16.500 25.500V12" stroke="#fff" stroke-width="4"/><path d="M9 16.500L16.500 8.500L24 16.500z" fill="#fff"/></svg>
<svg style="left:2515px;top:13px;" width="31" height="30" viewBox="0 0 31 30"><defs><linearGradient id="lg1" x1="0" y1="0" x2="1" y2="1"><stop offset="0" stop-color="#d9e14a"/><stop offset="0.450" stop-color="#3dbd7d"/><stop offset="1" stop-color="#1b7bd8"/></linearGradient></defs><path d="M2 2C12 0 24 6 30 15C24 22 12 29 3 29C6 20 5 10 2 2z" fill="url(#lg1)"/><path d="M17 13l13 2c-4 5-10 9.500-16 12z" fill="#1f55b5"/></svg>
<svg style="left:618.2px;top:70.3px;" width="27.6" height="27.6" viewBox="0 0 27.6 27.6"><circle cx="13.8" cy="13.8" r="13.8" fill="#9ad0ea"/><text x="13.8" y="14.100000000000001" text-anchor="middle" dominant-baseline="central" font-family='"Liberation Sans",sans-serif' font-size="17" font-weight="400" fill="#33464f" fill-opacity="0.9">C</text></svg>
<div style="left:656.80px;top:70.10px;height:29px;line-height:29px;font-size:21px;color:#000;white-space:pre;letter-spacing:0.80px;">PetDto.java</div>
<svg style="left:790px;top:76px;" width="17" height="17" viewBox="0 0 17 17"><path d="M1.500 1.500l14 14M15.500 1.500l-14 14" stroke="#b4bcc1" stroke-width="2"/></svg>
<svg style="left:1538.5px;top:71.9px;" width="7" height="7" viewBox="0 0 7 7"><circle cx="3.500" cy="3.500" r="3.200" fill="#6e6e6e"/></svg>
<svg style="left:1538.5px;top:80.7px;" width="7" height="7" viewBox="0 0 7 7"><circle cx="3.500" cy="3.500" r="3.200" fill="#6e6e6e"/></svg>
<svg style="left:1538.5px;top:89.5px;" width="7" height="7" viewBox="0 0 7 7"><circle cx="3.500" cy="3.500" r="3.200" fill="#6e6e6e"/></svg>
<svg style="left:1586.2px;top:70.3px;" width="27.6" height="27.6" viewBox="0 0 27.6 27.6"><circle cx="13.8" cy="13.8" r="13.8" fill="#9ad0ea"/><text x="13.8" y="14.100000000000001" text-anchor="middle" dominant-baseline="central" font-family='"Liberation Sans",sans-serif' font-size="17" font-weight="400" fill="#33464f" fill-opacity="0.9">C</text></svg>
<div style="left:1624.80px;top:70.10px;height:29px;line-height:29px;font-size:21px;color:#000;white-space:pre;letter-spacing:0.71px;">Pet.java</div>
<svg style="left:1722px;top:76px;" width="17" height="17" viewBox="0 0 17 17"><path d="M1.500 1.500l14 14M15.500 1.500l-14 14" stroke="#b4bcc1" stroke-width="2"/></svg>
<svg style="left:2490.5px;top:71.9px;" width="7" height="7" viewBox="0 0 7 7"><circle cx="3.500" cy="3.500" r="3.200" fill="#6e6e6e"/></svg>
<svg style="left:2490.5px;top:80.7px;" width="7" height="7" viewBox="0 0 7 7"><circle cx="3.500" cy="3.500" r="3.200" fill="#6e6e6e"/></svg>
<svg style="left:2490.5px;top:89.5px;" width="7" height="7" viewBox="0 0 7 7"><circle cx="3.500" cy="3.500" r="3.200" fill="#6e6e6e"/></svg>
<svg style="left:1430px;top:126px;" width="25" height="23" viewBox="0 0 25 23"><path d="M12.300 0L24.500 22.500H0z" fill="#dcd3b1"/><path d="M10.300 8h4v7.500h-4zM10.300 17h4v3.600h-4z" fill="#fff"/></svg>
<div style="left:1460.50px;top:124.30px;height:29px;line-height:29px;font-size:21px;color:#6e6e6e;white-space:pre;">1</div>
<svg style="left:1490.5px;top:131.25px;" width="19" height="12.5" viewBox="0 0 19 12.5"><path d="M2 10.5l7.5 -8.5l7.5 8.5" fill="none" stroke="#6e6e6e" stroke-width="3"/></svg>
<svg style="left:1532.5px;top:132.55px;" width="19" height="12.5" viewBox="0 0 19 12.5"><path d="M2 2l7.5 8.5l7.5 -8.5" fill="none" stroke="#6e6e6e" stroke-width="3"/></svg>
<div style="left:1538px;top:324px;width:28px;height:4px;background:#e2d9b4;"></div>
<div style="left:1546px;top:168px;width:14px;height:722px;background:rgba(128,128,128,0.430);border-radius:7px;"></div>
<div style="left:2498px;top:222px;width:14px;height:678px;background:rgba(128,128,128,0.430);border-radius:7px;"></div>
<svg style="left:2479px;top:181px;" width="27" height="21" viewBox="0 0 27 21"><path d="M2 10.500l7.500 7.500L24.500 2.500" fill="none" stroke="#5fa56b" stroke-width="4.400"/></svg>
<svg style="left:2478.5px;top:122.5px;" width="27" height="27" viewBox="0 0 27 27"><g transform="translate(13.5 13.5)"><rect x="-3.4" y="-12.5" width="6.8" height="6.25" rx="1" transform="rotate(0)" fill="#6e6e6e"/><rect x="-3.4" y="-12.5" width="6.8" height="6.25" rx="1" transform="rotate(45)" fill="#6e6e6e"/><rect x="-3.4" y="-12.5" width="6.8" height="6.25" rx="1" transform="rotate(90)" fill="#6e6e6e"/><rect x="-3.4" y="-12.5" width="6.8" height="6.25" rx="1" transform="rotate(135)" fill="#6e6e6e"/><rect x="-3.4" y="-12.5" width="6.8" height="6.25" rx="1" transform="rotate(180)" fill="#6e6e6e"/><rect x="-3.4" y="-12.5" width="6.8" height="6.25" rx="1" transform="rotate(225)" fill="#6e6e6e"/><rect x="-3.4" y="-12.5" width="6.8" height="6.25" rx="1" transform="rotate(270)" fill="#6e6e6e"/><rect x="-3.4" y="-12.5" width="6.8" height="6.25" rx="1" transform="rotate(315)" fill="#6e6e6e"/><circle r="9" fill="#6e6e6e"/><circle r="4.125" fill="#f2f2f2"/></g></svg>
<svg style="left:1584px;top:123px;" width="31" height="32" viewBox="0 0 31 32"><path d="M11 0h13v14H4V7z" fill="#aab4bc"/><path d="M4 7h7V0z" fill="#d5dade"/><rect x="0" y="17" width="31" height="14.500" fill="#9ad0ea"/><text x="15.500" y="29" text-anchor="middle" font-family='"Liberation Sans",sans-serif' font-size="13.500" font-weight="700" fill="#39566a">DDL</text></svg>
<svg style="left:1636px;top:124.2px;" width="28" height="28" viewBox="0 0 28 28"><g transform="translate(14 14)"><circle r="12.5" fill="none" stroke="#6e6e6e" stroke-width="3"/><path d="M0 -12.5v8.500M0 12.5v-8.500M-12.5 0h8.500M12.5 0h-8.500" stroke="#6e6e6e" stroke-width="3.6"/></g></svg>
<div style="left:1682.5px;top:118px;width:2px;height:40px;background:#d1d1d1;"></div>
<svg style="left:1701.8px;top:123.8px;" width="28" height="28" viewBox="0 0 28 28"><circle cx="14" cy="14" r="14" fill="#f1cb8e"/><text x="14" y="12.8" text-anchor="middle" dominant-baseline="central" font-family='"Liberation Sans",sans-serif' font-size="18" font-weight="400" fill="#5c4a2c" fill-opacity="0.9">a</text></svg>
<svg style="left:1722.75px;top:149.9px;" width="11.5" height="5.8" viewBox="0 0 11.5 5.8"><path d="M0 0h11.5l-5.75 5.8z" fill="#2b2b2b"/></svg>
<svg style="left:1753.8px;top:123.8px;" width="28" height="28" viewBox="0 0 28 28"><circle cx="14" cy="14" r="14" fill="#f0b4c0"/><text x="14" y="12.800" text-anchor="middle" dominant-baseline="central" font-family='"Liberation Sans",sans-serif' font-size="18" fill="#5b3540">m</text></svg>
<svg style="left:1774.45px;top:149.9px;" width="11.5" height="5.8" viewBox="0 0 11.5 5.8"><path d="M0 0h11.5l-5.75 5.8z" fill="#2b2b2b"/></svg>
<svg style="left:1809px;top:123px;" width="20" height="30" viewBox="0 0 20 30"><circle cx="9" cy="8.500" r="6.200" fill="none" stroke="#d6a246" stroke-width="4.600"/><path d="M9 15v14h-3.500M9 22.500h6v4.500H9" fill="none" stroke="#d6a246" stroke-width="4.200"/></svg>
<svg style="left:1826.25px;top:149.9px;" width="11.5" height="5.8" viewBox="0 0 11.5 5.8"><path d="M0 0h11.5l-5.75 5.8z" fill="#2b2b2b"/></svg>
<svg style="left:1855px;top:122px;" width="33" height="32" viewBox="0 0 33 32"><path d="M31 1c1 12-3 22-14 23c-4 0.300-6-1-8-2.500C7 12 18 4 31 1z" fill="#a8d18c"/><circle cx="7.500" cy="22" r="5" fill="#f2f2f2" stroke="#e8892d" stroke-width="2.400"/><path d="M11 26l4 4.500" stroke="#e8892d" stroke-width="2.600"/></svg>
<svg style="left:1878.05px;top:149.9px;" width="11.5" height="5.8" viewBox="0 0 11.5 5.8"><path d="M0 0h11.5l-5.75 5.8z" fill="#2b2b2b"/></svg>
<div style="left:1904px;top:118px;width:2px;height:40px;background:#d1d1d1;"></div>
<svg style="left:1923px;top:123px;" width="34" height="32" viewBox="0 0 34 32"><path d="M2 14C2 4 12 0 22 2c6 8 5 20-4 23C8 27 2 22 2 14z" fill="#a8d18c"/><path d="M4 8l16 16" stroke="#f2f2f2" stroke-width="1.800"/><rect x="12" y="16" width="20" height="15" fill="#2e2b8c"/><path d="M14.500 21.500h15M14.500 26h15M19.500 19v10.500M24.500 19v10.500" stroke="#fff" stroke-width="1.600"/></svg>
<div style="left:-35.15px;top:98.45px;width:111.30px;height:29px;line-height:29px;font-size:20.5px;color:#000;white-space:pre;text-align:center;letter-spacing:1.26px;transform:rotate(-90deg);">Project</div>
<svg style="left:10px;top:162px;" width="22" height="18" viewBox="0 0 22 18"><path d="M0 0h8.500l3 4H22v14H0z" fill="#6e6e6e"/></svg>
<div style="left:-39.15px;top:250.45px;width:119.30px;height:29px;line-height:29px;font-size:20.5px;color:#000;white-space:pre;text-align:center;letter-spacing:1.71px;transform:rotate(-90deg);">Commit</div>
<svg style="left:8px;top:313px;" width="26" height="26" viewBox="0 0 26 26"><circle cx="13" cy="13" r="6.200" fill="none" stroke="#6e6e6e" stroke-width="3.400"/><path d="M0 13h6.500M19.500 13H26" stroke="#6e6e6e" stroke-width="3.400"/></svg>
<div style="left:-56.65px;top:986.65px;width:154.30px;height:29px;line-height:29px;font-size:20.5px;color:#000;white-space:pre;text-align:center;letter-spacing:1.47px;transform:rotate(-90deg);">Bookmarks</div>
<svg style="left:12px;top:1070px;" width="18" height="22" viewBox="0 0 18 22"><path d="M0 0h18v22l-9-8l-9 8z" fill="#6e6e6e"/></svg>
<div style="left:-47.00px;top:1172.30px;width:135.00px;height:29px;line-height:29px;font-size:20.5px;color:#000;white-space:pre;text-align:center;letter-spacing:1.47px;transform:rotate(-90deg);">Structure</div>
<svg style="left:11px;top:1248px;" width="20" height="19" viewBox="0 0 20 19"><rect x="10.500" y="0" width="8.500" height="8.500" fill="#6e6e6e"/><rect x="0" y="10.500" width="8.500" height="8.500" fill="#6e6e6e"/><rect x="10.500" y="10.500" width="8.500" height="8.500" fill="#6e6e6e"/></svg>
<div style="left:-70.50px;top:1371.60px;width:182.00px;height:29px;line-height:29px;font-size:20.5px;color:#000;white-space:pre;text-align:center;letter-spacing:1.52px;transform:rotate(-90deg);">JPA Structure</div>
<svg style="left:9px;top:1467px;" width="24" height="24" viewBox="0 0 24 24"><rect x="8" y="0" width="8" height="8" fill="#6e6e6e"/><rect x="0" y="15" width="9" height="8.500" fill="#6e6e6e"/><rect x="14.500" y="15" width="9" height="8.500" fill="#6e6e6e"/><path d="M12 8v4M4.500 15v-3.500h15V15" fill="none" stroke="#6e6e6e" stroke-width="2"/></svg>
<svg style="left:2528.5px;top:78.5px;" width="22" height="23" viewBox="0 0 22 23"><ellipse cx="11" cy="4.500" rx="11" ry="4.500" fill="#6e6e6e"/><path d="M0 7.500c2 3.500 20 3.500 22 0v4.200c-2 3.500-20 3.500-22 0zM0 13.600c2 3.500 20 3.500 22 0v4.200c-2 3.500-20 3.500-22 0z" fill="#6e6e6e"/></svg>
<div style="left:2471.35px;top:148.05px;width:134.90px;height:29px;line-height:29px;font-size:20.5px;color:#000;white-space:pre;text-align:center;letter-spacing:1.02px;transform:rotate(90deg);">Database</div>
<svg style="left:2525.6px;top:252px;" width="27.5" height="20.5" viewBox="0 0 27.5 20.5"><path d="M0 19.700C0 13 1.500 8 4.500 5.500C7 3.600 12 3.200 16 4.600C18.500 5.500 20 6.800 21.500 6.400C23.500 5.800 24 3.500 22.800 2.300C21.800 1.400 20.300 1.800 19.800 2.700L19.100 1.400C20.300 -0.200 23 -0.400 24.800 1.300C27 3.500 26.800 7 24 9.600C21.500 11.800 19.800 12.800 19.400 15L19 19.700H16.500C16.500 17.500 15.300 16 13.700 16C12.100 16 11 17.500 11 19.700H8.300C8.300 17.500 7.200 16 5.600 16C4 16 3 17.500 3 19.700Z" fill="#6e6e6e"/><circle cx="17.600" cy="8.100" r="0.650" fill="#f2f2f2"/><path d="M5.300 7.600L7.900 10.800L12 7.800" fill="none" stroke="#d8d8d8" stroke-width="0.500"/></svg>
<div style="left:2485.80px;top:304.80px;width:106.00px;height:29px;line-height:29px;font-size:20.5px;color:#000;white-space:pre;text-align:center;letter-spacing:0.90px;transform:rotate(90deg);">Gradle</div>
<svg style="left:2528px;top:398px;" width="24" height="26" viewBox="0 0 24 26"><path d="M10.500 2a8 8 0 0 1 8 8v7l3 4H-0.500l3-4v-7a8 8 0 0 1 8-8z" fill="#6e6e6e"/><path d="M7 22.500a3.500 3.500 0 0 0 7 0z" fill="#6e6e6e"/><circle cx="18.500" cy="5.500" r="5.500" fill="#3d97d6"/></svg>
<div style="left:2454.30px;top:484.30px;width:169.00px;height:29px;line-height:29px;font-size:20.5px;color:#000;white-space:pre;text-align:center;letter-spacing:1.44px;transform:rotate(90deg);">Notifications</div>
<div style="left:2527.00px;top:602.80px;height:38px;line-height:38px;font-size:27px;color:#6e6e6e;white-space:pre;font-weight:700;font-style:italic;">m</div>
<div style="left:2486.85px;top:663.55px;width:103.90px;height:29px;line-height:29px;font-size:20.5px;color:#000;white-space:pre;text-align:center;letter-spacing:0.60px;transform:rotate(90deg);">Maven</div>
<svg style="left:68px;top:72px;" width="28" height="26" viewBox="0 0 28 26"><rect x="0" y="0" width="28" height="26" fill="#aeb8c0"/><rect x="2" y="6.500" width="24" height="17.500" fill="#f2f2f2"/><rect x="4" y="8.500" width="20" height="13.500" fill="#9ad0ea"/></svg>
<div style="left:106.70px;top:69.00px;height:32px;line-height:32px;font-size:23px;color:#000;white-space:pre;letter-spacing:1.02px;">Project</div>
<svg style="left:217px;top:82px;" width="18" height="10" viewBox="0 0 18 10"><path d="M0 0h18l-9 10z" fill="#6e6e6e"/></svg>
<svg style="left:390px;top:70px;" width="24" height="28" viewBox="0 0 24 28"><rect x="0" y="0" width="24" height="3.400" fill="#6e6e6e"/><rect x="0" y="24.600" width="24" height="3.400" fill="#6e6e6e"/><path d="M12 6.500l6.500 6h-13zM12 21.500l6.500-6h-13z" fill="#6e6e6e"/></svg>
<svg style="left:442px;top:72px;" width="24" height="24" viewBox="0 0 24 24"><rect x="0" y="10.300" width="24" height="3.400" fill="#6e6e6e"/><path d="M12 7.500l6.500-6h-13zM12 16.500l6.500 6h-13z" fill="#6e6e6e"/></svg>
<div style="left:486px;top:64px;width:2px;height:40px;background:#d1d1d1;"></div>
<svg style="left:506.5px;top:70.5px;" width="27" height="27" viewBox="0 0 27 27"><g transform="translate(13.5 13.5)"><rect x="-3.4" y="-12.5" width="6.8" height="6.25" rx="1" transform="rotate(0)" fill="#6e6e6e"/><rect x="-3.4" y="-12.5" width="6.8" height="6.25" rx="1" transform="rotate(45)" fill="#6e6e6e"/><rect x="-3.4" y="-12.5" width="6.8" height="6.25" rx="1" transform="rotate(90)" fill="#6e6e6e"/><rect x="-3.4" y="-12.5" width="6.8" height="6.25" rx="1" transform="rotate(135)" fill="#6e6e6e"/><rect x="-3.4" y="-12.5" width="6.8" height="6.25" rx="1" transform="rotate(180)" fill="#6e6e6e"/><rect x="-3.4" y="-12.5" width="6.8" height="6.25" rx="1" transform="rotate(225)" fill="#6e6e6e"/><rect x="-3.4" y="-12.5" width="6.8" height="6.25" rx="1" transform="rotate(270)" fill="#6e6e6e"/><rect x="-3.4" y="-12.5" width="6.8" height="6.25" rx="1" transform="rotate(315)" fill="#6e6e6e"/><circle r="9" fill="#6e6e6e"/><circle r="4.125" fill="#f2f2f2"/></g></svg>
<div style="left:560px;top:82.4px;width:24px;height:3.2px;background:#6e6e6e;"></div>
<div style="left:42px;top:112px;width:556px;height:673px;overflow:hidden">
<svg style="left:121.25px;top:8.8px;" width="19.5" height="12" viewBox="0 0 19.5 12"><path d="M2 2l7.75 8l7.75 -8" fill="none" stroke="#7a7a7a" stroke-width="2.6"/></svg>
<svg style="left:158px;top:4.4px;" width="28" height="22" viewBox="0 0 28 22"><path d="M0 0h11l3.2 4.2H28V22H0z" fill="#9ad0ea"/></svg>
<div style="left:194.75px;top:-0.50px;height:35px;line-height:35px;font-size:25px;color:#000;white-space:pre;letter-spacing:0.08px;">java</div>
<svg style="left:157.25px;top:48.8px;" width="19.5" height="12" viewBox="0 0 19.5 12"><path d="M2 2l7.75 8l7.75 -8" fill="none" stroke="#7a7a7a" stroke-width="2.6"/></svg>
<svg style="left:194px;top:44.4px;" width="28" height="22" viewBox="0 0 28 22"><path d="M0 0h11l3.2 4.2H28V22H0z" fill="#aeb8c0"/><circle cx="10.2" cy="13.4" r="3.6" fill="#fff"/></svg>
<div style="left:230.50px;top:39.50px;height:35px;line-height:35px;font-size:25px;color:#000;white-space:pre;letter-spacing:0.93px;">com.example</div>
<svg style="left:193.25px;top:88.8px;" width="19.5" height="12" viewBox="0 0 19.5 12"><path d="M2 2l7.75 8l7.75 -8" fill="none" stroke="#7a7a7a" stroke-width="2.6"/></svg>
<svg style="left:230px;top:84.4px;" width="28" height="22" viewBox="0 0 28 22"><path d="M0 0h11l3.2 4.2H28V22H0z" fill="#aeb8c0"/><circle cx="10.2" cy="13.4" r="3.6" fill="#fff"/></svg>
<div style="left:266.50px;top:79.50px;height:35px;line-height:35px;font-size:25px;color:#000;white-space:pre;letter-spacing:1.40px;">demo</div>
<svg style="left:232.5px;top:126.55px;" width="12" height="19.5" viewBox="0 0 12 19.5"><path d="M2 2l8 7.75l-8 7.75" fill="none" stroke="#7a7a7a" stroke-width="2.6"/></svg>
<svg style="left:266px;top:124.4px;" width="28" height="22" viewBox="0 0 28 22"><path d="M0 0h11l3.2 4.2H28V22H0z" fill="#aeb8c0"/><circle cx="10.2" cy="13.4" r="3.6" fill="#fff"/></svg>
<div style="left:302.50px;top:119.50px;height:35px;line-height:35px;font-size:25px;color:#000;white-space:pre;letter-spacing:1.25px;">controllers</div>
<svg style="left:229.25px;top:168.8px;" width="19.5" height="12" viewBox="0 0 19.5 12"><path d="M2 2l7.75 8l7.75 -8" fill="none" stroke="#7a7a7a" stroke-width="2.6"/></svg>
<svg style="left:266px;top:164.4px;" width="28" height="22" viewBox="0 0 28 22"><path d="M0 0h11l3.2 4.2H28V22H0z" fill="#aeb8c0"/><circle cx="10.2" cy="13.4" r="3.6" fill="#fff"/></svg>
<div style="left:302.50px;top:159.50px;height:35px;line-height:35px;font-size:25px;color:#000;white-space:pre;letter-spacing:1.52px;">dtos</div>
<svg style="left:302.2px;top:202.5px;" width="27.6" height="27.6" viewBox="0 0 27.6 27.6"><circle cx="13.8" cy="13.8" r="13.8" fill="#9ad0ea"/><text x="13.8" y="14.100000000000001" text-anchor="middle" dominant-baseline="central" font-family='"Liberation Sans",sans-serif' font-size="17" font-weight="400" fill="#33464f" fill-opacity="0.9">C</text></svg>
<div style="left:339.00px;top:199.50px;height:35px;line-height:35px;font-size:25px;color:#000;white-space:pre;letter-spacing:0.81px;">AssigneeInfo</div>
<svg style="left:302.2px;top:242.5px;" width="27.6" height="27.6" viewBox="0 0 27.6 27.6"><circle cx="13.8" cy="13.8" r="13.8" fill="#9ad0ea"/><text x="13.8" y="14.3" text-anchor="middle" dominant-baseline="central" font-family='"Liberation Sans",sans-serif' font-size="15.5" font-weight="700" fill="#33464f" fill-opacity="0.85">R</text></svg>
<svg style="left:299px;top:239.3px;" width="14" height="12" viewBox="0 0 14 12"><ellipse cx="6" cy="5.5" rx="5.6" ry="3" transform="rotate(-38 6 5.5)" fill="#9aa3ab"/><path d="M8 7l4 3.5" stroke="#9aa3ab" stroke-width="1.6"/></svg>
<div style="left:339.00px;top:239.50px;height:35px;line-height:35px;font-size:25px;color:#000;white-space:pre;letter-spacing:1.11px;">OwnerDto</div>
<svg style="left:302.2px;top:282.5px;" width="27.6" height="27.6" viewBox="0 0 27.6 27.6"><circle cx="13.8" cy="13.8" r="13.8" fill="#a8d18c"/><text x="13.8" y="14.100000000000001" text-anchor="middle" dominant-baseline="central" font-family='"DejaVu Sans Mono","Liberation Mono",monospace' font-size="16.5" font-weight="400" fill="#3f5232" fill-opacity="0.9">I</text></svg>
<div style="left:339.00px;top:279.50px;height:35px;line-height:35px;font-size:25px;color:#000;white-space:pre;letter-spacing:0.89px;">OwnerInfo</div>
<svg style="left:302.2px;top:322.5px;" width="27.6" height="27.6" viewBox="0 0 27.6 27.6"><circle cx="13.8" cy="13.8" r="13.8" fill="#8ac3dc"/><text x="13.8" y="14.100000000000001" text-anchor="middle" dominant-baseline="central" font-family='"Liberation Sans",sans-serif' font-size="17" font-weight="400" fill="#33464f" fill-opacity="0.9">C</text></svg>
<div style="left:339.00px;top:319.50px;height:35px;line-height:35px;font-size:25px;color:#000;white-space:pre;letter-spacing:0.60px;">PetDto</div>
<svg style="left:302.2px;top:362.5px;" width="27.6" height="27.6" viewBox="0 0 27.6 27.6"><circle cx="13.8" cy="13.8" r="13.8" fill="#a8d18c"/><text x="13.8" y="14.100000000000001" text-anchor="middle" dominant-baseline="central" font-family='"DejaVu Sans Mono","Liberation Mono",monospace' font-size="16.5" font-weight="400" fill="#3f5232" fill-opacity="0.9">I</text></svg>
<div style="left:339.00px;top:359.50px;height:35px;line-height:35px;font-size:25px;color:#000;white-space:pre;letter-spacing:0.54px;">PetInfo</div>
<svg style="left:302.2px;top:402.5px;" width="27.6" height="27.6" viewBox="0 0 27.6 27.6"><circle cx="13.8" cy="13.8" r="13.8" fill="#9ad0ea"/><text x="13.8" y="14.3" text-anchor="middle" dominant-baseline="central" font-family='"Liberation Sans",sans-serif' font-size="15.5" font-weight="700" fill="#33464f" fill-opacity="0.85">R</text></svg>
<svg style="left:299px;top:399.3px;" width="14" height="12" viewBox="0 0 14 12"><ellipse cx="6" cy="5.5" rx="5.6" ry="3" transform="rotate(-38 6 5.5)" fill="#9aa3ab"/><path d="M8 7l4 3.5" stroke="#9aa3ab" stroke-width="1.6"/></svg>
<div style="left:339.00px;top:399.50px;height:35px;line-height:35px;font-size:25px;color:#000;white-space:pre;letter-spacing:0.62px;">PetRecord</div>
<svg style="left:302.2px;top:442.5px;" width="27.6" height="27.6" viewBox="0 0 27.6 27.6"><circle cx="13.8" cy="13.8" r="13.8" fill="#9ad0ea"/><text x="13.8" y="14.100000000000001" text-anchor="middle" dominant-baseline="central" font-family='"Liberation Sans",sans-serif' font-size="17" font-weight="400" fill="#33464f" fill-opacity="0.9">C</text></svg>
<div style="left:339.00px;top:439.50px;height:35px;line-height:35px;font-size:25px;color:#000;white-space:pre;letter-spacing:0.71px;">TaskDto</div>
<svg style="left:302.2px;top:482.5px;" width="27.6" height="27.6" viewBox="0 0 27.6 27.6"><circle cx="13.8" cy="13.8" r="13.8" fill="#9ad0ea"/><text x="13.8" y="14.100000000000001" text-anchor="middle" dominant-baseline="central" font-family='"Liberation Sans",sans-serif' font-size="17" font-weight="400" fill="#33464f" fill-opacity="0.9">C</text></svg>
<div style="left:339.00px;top:479.50px;height:35px;line-height:35px;font-size:25px;color:#000;white-space:pre;letter-spacing:1.00px;">TaskWithAssigneeInfo</div>
<svg style="left:229.25px;top:528.8px;" width="19.5" height="12" viewBox="0 0 19.5 12"><path d="M2 2l7.75 8l7.75 -8" fill="none" stroke="#7a7a7a" stroke-width="2.6"/></svg>
<svg style="left:266px;top:524.4px;" width="28" height="22" viewBox="0 0 28 22"><path d="M0 0h11l3.2 4.2H28V22H0z" fill="#aeb8c0"/><circle cx="10.2" cy="13.4" r="3.6" fill="#fff"/></svg>
<div style="left:302.50px;top:519.50px;height:35px;line-height:35px;font-size:25px;color:#000;white-space:pre;letter-spacing:1.18px;">entities</div>
<svg style="left:302.2px;top:562.5px;" width="27.6" height="27.6" viewBox="0 0 27.6 27.6"><circle cx="13.8" cy="13.8" r="13.8" fill="#9ad0ea"/><text x="13.8" y="14.100000000000001" text-anchor="middle" dominant-baseline="central" font-family='"Liberation Sans",sans-serif' font-size="17" font-weight="400" fill="#33464f" fill-opacity="0.9">C</text></svg>
<div style="left:339.00px;top:559.50px;height:35px;line-height:35px;font-size:25px;color:#000;white-space:pre;letter-spacing:0.82px;">Assignee</div>
<svg style="left:302.2px;top:602.5px;" width="27.6" height="27.6" viewBox="0 0 27.6 27.6"><circle cx="13.8" cy="13.8" r="13.8" fill="#9ad0ea"/><text x="13.8" y="14.100000000000001" text-anchor="middle" dominant-baseline="central" font-family='"Liberation Sans",sans-serif' font-size="17" font-weight="400" fill="#33464f" fill-opacity="0.9">C</text></svg>
<div style="left:339.00px;top:599.50px;height:35px;line-height:35px;font-size:25px;color:#000;white-space:pre;letter-spacing:1.06px;">Owner</div>
<svg style="left:302.2px;top:642.5px;" width="27.6" height="27.6" viewBox="0 0 27.6 27.6"><circle cx="13.8" cy="13.8" r="13.8" fill="#9ad0ea"/><text x="13.8" y="14.100000000000001" text-anchor="middle" dominant-baseline="central" font-family='"Liberation Sans",sans-serif' font-size="17" font-weight="400" fill="#33464f" fill-opacity="0.9">C</text></svg>
<div style="left:339.00px;top:639.50px;height:35px;line-height:35px;font-size:25px;color:#000;white-space:pre;">Pet</div>
</div>
<div style="left:54.50px;top:800.00px;height:32px;line-height:32px;font-size:23px;color:#000;white-space:pre;letter-spacing:1.25px;">JPA Structure</div>
<svg style="left:506.5px;top:800.5px;" width="27" height="27" viewBox="0 0 27 27"><g transform="translate(13.5 13.5)"><rect x="-3.4" y="-12.5" width="6.8" height="6.25" rx="1" transform="rotate(0)" fill="#6e6e6e"/><rect x="-3.4" y="-12.5" width="6.8" height="6.25" rx="1" transform="rotate(45)" fill="#6e6e6e"/><rect x="-3.4" y="-12.5" width="6.8" height="6.25" rx="1" transform="rotate(90)" fill="#6e6e6e"/><rect x="-3.4" y="-12.5" width="6.8" height="6.25" rx="1" transform="rotate(135)" fill="#6e6e6e"/><rect x="-3.4" y="-12.5" width="6.8" height="6.25" rx="1" transform="rotate(180)" fill="#6e6e6e"/><rect x="-3.4" y="-12.5" width="6.8" height="6.25" rx="1" transform="rotate(225)" fill="#6e6e6e"/><rect x="-3.4" y="-12.5" width="6.8" height="6.25" rx="1" transform="rotate(270)" fill="#6e6e6e"/><rect x="-3.4" y="-12.5" width="6.8" height="6.25" rx="1" transform="rotate(315)" fill="#6e6e6e"/><circle r="9" fill="#6e6e6e"/><circle r="4.125" fill="#f2f2f2"/></g></svg>
<div style="left:560px;top:812.4px;width:24px;height:3.2px;background:#6e6e6e;"></div>
<svg style="left:62px;top:860px;" width="20" height="20" viewBox="0 0 20 20"><path d="M10 0v20M0 10h20" stroke="#6e6e6e" stroke-width="3.400"/></svg>
<svg style="left:78.65px;top:881.75px;" width="11.5" height="6.5" viewBox="0 0 11.5 6.5"><path d="M0 0h11.5l-5.75 6.5z" fill="#2b2b2b"/></svg>
<div style="left:104.5px;top:850px;width:2px;height:40px;background:#d1d1d1;"></div>
<div style="left:116px;top:848px;width:44px;height:44px;background:#d2d2d2;border-radius:5px;"></div>
<svg style="left:124px;top:856px;" width="29" height="24" viewBox="0 0 29 24"><path d="M2 4.100v19.900M8.100 4.100v19.900M14.200 0v24M20.300 4.100v19.900M26.400 8.700v15.300" stroke="#6e6e6e" stroke-width="3.900"/></svg>
<svg style="left:176px;top:856px;" width="29" height="29" viewBox="0 0 29 29"><path d="M3.500 25.500L17 12" stroke="#6e6e6e" stroke-width="5.500" stroke-linecap="round"/><path d="M27.500 5.500l-5 5l-4.500-1l-1-4.500l5-5a8 8 0 1 0 5.500 5.500z" fill="#6e6e6e"/></svg>
<svg style="left:228px;top:855.8px;" width="28" height="28" viewBox="0 0 28 28"><g transform="translate(14 14)"><circle r="12.5" fill="none" stroke="#6e6e6e" stroke-width="3"/><path d="M0 -12.5v8.500M0 12.5v-8.500M-12.5 0h8.500M12.5 0h-8.500" stroke="#6e6e6e" stroke-width="3.6"/></g></svg>
<svg style="left:280px;top:855.5px;" width="30" height="30" viewBox="0 0 30 30"><path d="M3.500 27.500h-1a2 2 0 0 1-2-2V3a2 2 0 0 1 2-2h23a2 2 0 0 1 2 2v8" fill="none" stroke="#2e2b8c" stroke-width="2"/><path d="M0.500 3a2 2 0 0 1 2-2h23a2 2 0 0 1 2 2v5.500h-27z" fill="#2e2b8c"/><circle cx="5" cy="4.800" r="1.300" fill="#fff"/><circle cx="9.300" cy="4.800" r="1.300" fill="#fff"/><circle cx="13.600" cy="4.800" r="1.300" fill="#fff"/><path d="M7 21.500c5-9.500 17-9.500 22 0c-5 9.500-17 9.500-22 0z" fill="#f2f2f2" stroke="#ee8a33" stroke-width="2.200"/><circle cx="18" cy="21.500" r="4.400" fill="#ee8a33"/></svg>
<div style="left:42px;top:900px;width:556px;height:616px;overflow:hidden">
<svg style="left:13.25px;top:13.1px;" width="19.5" height="12" viewBox="0 0 19.5 12"><path d="M2 2l7.75 8l7.75 -8" fill="none" stroke="#7a7a7a" stroke-width="2.6"/></svg>
<svg style="left:50px;top:7.6px;" width="29" height="27" viewBox="0 0 29 27"><path d="M0 0h9.500l3 4.500H22V9h-8v12.500H0z" fill="#aeb8c0"/><path d="M15 12h13.500M15 16h13.500M15 20h13.500M15 24h13.500" stroke="#aeb8c0" stroke-width="2"/></svg>
<div style="left:86.80px;top:3.80px;height:35px;line-height:35px;font-size:25px;color:#000;white-space:pre;letter-spacing:0.98px;">Persistence units</div>
<svg style="left:49.25px;top:53.1px;" width="19.5" height="12" viewBox="0 0 19.5 12"><path d="M2 2l7.75 8l7.75 -8" fill="none" stroke="#7a7a7a" stroke-width="2.6"/></svg>
<svg style="left:86px;top:47.6px;" width="29" height="27" viewBox="0 0 29 27"><path d="M0 0h9.500l3 4.500H22V9h-8v12.500H0z" fill="#aeb8c0"/><path d="M15 12h13.500M15 16h13.500M15 20h13.500M15 24h13.500" stroke="#aeb8c0" stroke-width="2"/></svg>
<div style="left:122.80px;top:43.80px;height:35px;line-height:35px;font-size:25px;color:#000;white-space:pre;letter-spacing:0.88px;">Default</div>
<svg style="left:120.8px;top:85.1px;" width="32" height="32" viewBox="0 0 32 32"><path d="M15.2 5.800H21.700V1.200L30.200 8.700L21.700 16.200V11.600H17" fill="none" stroke="#2e2b8c" stroke-width="1.900"/><path d="M22.800 11.600H8.500V6.800L1.200 14.700L8.500 22.600V17.900H14" fill="none" stroke="#2e2b8c" stroke-width="1.900"/><path d="M14 17c0-3 18-3 18 0v11.500c0 3-18 3-18 0z" fill="#fff"/><ellipse cx="23" cy="18" rx="8" ry="3" fill="#ee8a33"/><path d="M15 20.700c1.500 2.800 14.500 2.800 16 0v2.600c-1.500 2.800-14.500 2.800-16 0zM15 24.600c1.500 2.800 14.500 2.800 16 0v2.600c-1.500 2.800-14.500 2.800-16 0zM15 28.500c1.500 2.800 14.500 2.800 16 0v0.500c-1.500 3.200-14.500 3.200-16 0z" fill="#ee8a33"/></svg>
<div style="left:159.30px;top:83.80px;height:35px;line-height:35px;font-size:25px;color:#000;white-space:pre;letter-spacing:0.96px;">Hibernate Custom Types</div>
<svg style="left:120.8px;top:125.1px;" width="32" height="32" viewBox="0 0 32 32"><path d="M15.2 5.800H21.700V1.200L30.200 8.700L21.700 16.200V11.600H17" fill="none" stroke="#2e2b8c" stroke-width="1.900"/><path d="M22.800 11.600H8.500V6.800L1.200 14.700L8.500 22.600V17.900H14" fill="none" stroke="#2e2b8c" stroke-width="1.900"/><path d="M14 17c0-3 18-3 18 0v11.500c0 3-18 3-18 0z" fill="#fff"/><ellipse cx="23" cy="18" rx="8" ry="3" fill="#ee8a33"/><path d="M15 20.700c1.500 2.800 14.500 2.800 16 0v2.600c-1.500 2.800-14.500 2.800-16 0zM15 24.600c1.500 2.800 14.500 2.800 16 0v2.600c-1.500 2.800-14.500 2.800-16 0zM15 28.500c1.500 2.800 14.500 2.800 16 0v0.500c-1.500 3.200-14.500 3.200-16 0z" fill="#ee8a33"/></svg>
<div style="left:158.80px;top:123.80px;height:35px;line-height:35px;font-size:25px;color:#000;white-space:pre;letter-spacing:1.06px;">JPA Converters</div>
<svg style="left:88.5px;top:170.85px;" width="12" height="19.5" viewBox="0 0 12 19.5"><path d="M2 2l8 7.75l-8 7.75" fill="none" stroke="#7a7a7a" stroke-width="2.6"/></svg>
<svg style="left:121.8px;top:165.8px;" width="30.5" height="30" viewBox="0 0 30.5 30" preserveAspectRatio="none"><ellipse cx="14" cy="3.800" rx="14" ry="3.800" fill="#aab4bc"/><path d="M0 7.300c2 3.300 26 3.300 28 0v4.200c-2 3.300-26 3.300-28 0zM0 14.700c2 3.300 26 3.300 28 0v4.200c-2 3.300-26 3.300-28 0zM0 22.100c2 3.300 26 3.300 28 0v4.200c-2 3.300-26 3.300-28 0z" fill="#aab4bc"/><rect x="11" y="14.600" width="19.500" height="15.400" fill="#fff"/><rect x="12.300" y="15.800" width="18.200" height="14.200" fill="#97a4ad"/><rect x="13.700" y="17.200" width="15.400" height="2.600" fill="#c9d1d6"/><path d="M13.700 21.200h4.600v3h-4.600zM19.700 21.200h9.400v3h-9.400zM13.700 25.600h4.600v3h-4.600zM19.700 25.600h9.400v3h-9.400z" fill="#e6eaed"/></svg>
<div style="left:159.00px;top:163.80px;height:35px;line-height:35px;font-size:25px;color:#000;white-space:pre;letter-spacing:0.82px;">Assignee</div>
<div style="left:287.50px;top:163.80px;height:35px;line-height:35px;font-size:25px;color:#999;white-space:pre;letter-spacing:1.00px;">(com.example.demo.entities)</div>
<svg style="left:88.5px;top:210.85px;" width="12" height="19.5" viewBox="0 0 12 19.5"><path d="M2 2l8 7.75l-8 7.75" fill="none" stroke="#7a7a7a" stroke-width="2.6"/></svg>
<svg style="left:121.8px;top:205.8px;" width="30.5" height="30" viewBox="0 0 30.5 30" preserveAspectRatio="none"><ellipse cx="14" cy="3.800" rx="14" ry="3.800" fill="#aab4bc"/><path d="M0 7.300c2 3.300 26 3.300 28 0v4.200c-2 3.300-26 3.300-28 0zM0 14.700c2 3.300 26 3.300 28 0v4.200c-2 3.300-26 3.300-28 0zM0 22.100c2 3.300 26 3.300 28 0v4.200c-2 3.300-26 3.300-28 0z" fill="#aab4bc"/><rect x="11" y="14.600" width="19.500" height="15.400" fill="#fff"/><rect x="12.300" y="15.800" width="18.200" height="14.200" fill="#97a4ad"/><rect x="13.700" y="17.200" width="15.400" height="2.600" fill="#c9d1d6"/><path d="M13.700 21.200h4.600v3h-4.600zM19.700 21.200h9.400v3h-9.400zM13.700 25.600h4.600v3h-4.600zM19.700 25.600h9.400v3h-9.400z" fill="#e6eaed"/></svg>
<div style="left:159.00px;top:203.80px;height:35px;line-height:35px;font-size:25px;color:#000;white-space:pre;letter-spacing:1.06px;">Owner</div>
<div style="left:256.50px;top:203.80px;height:35px;line-height:35px;font-size:25px;color:#999;white-space:pre;letter-spacing:1.00px;">(com.example.demo.entities)</div>
<svg style="left:85.25px;top:253.1px;" width="19.5" height="12" viewBox="0 0 19.5 12"><path d="M2 2l7.75 8l7.75 -8" fill="none" stroke="#7a7a7a" stroke-width="2.6"/></svg>
<svg style="left:121.8px;top:245.8px;" width="30.5" height="30" viewBox="0 0 30.5 30" preserveAspectRatio="none"><ellipse cx="14" cy="3.800" rx="14" ry="3.800" fill="#aab4bc"/><path d="M0 7.300c2 3.300 26 3.300 28 0v4.200c-2 3.300-26 3.300-28 0zM0 14.700c2 3.300 26 3.300 28 0v4.200c-2 3.300-26 3.300-28 0zM0 22.100c2 3.300 26 3.300 28 0v4.200c-2 3.300-26 3.300-28 0z" fill="#aab4bc"/><rect x="11" y="14.600" width="19.500" height="15.400" fill="#fff"/><rect x="12.300" y="15.800" width="18.200" height="14.200" fill="#97a4ad"/><rect x="13.700" y="17.200" width="15.400" height="2.600" fill="#c9d1d6"/><path d="M13.700 21.200h4.600v3h-4.600zM19.700 21.200h9.400v3h-9.400zM13.700 25.600h4.600v3h-4.600zM19.700 25.600h9.400v3h-9.400z" fill="#e6eaed"/></svg>
<div style="left:159.00px;top:243.80px;height:35px;line-height:35px;font-size:25px;color:#000;white-space:pre;">Pet</div>
<div style="left:218.50px;top:243.80px;height:35px;line-height:35px;font-size:25px;color:#999;white-space:pre;letter-spacing:1.00px;">(com.example.demo.entities)</div>
<svg style="left:88.5px;top:570.85px;" width="12" height="19.5" viewBox="0 0 12 19.5"><path d="M2 2l8 7.75l-8 7.75" fill="none" stroke="#7a7a7a" stroke-width="2.6"/></svg>
<svg style="left:121.8px;top:565.8px;" width="30.5" height="30" viewBox="0 0 30.5 30" preserveAspectRatio="none"><ellipse cx="14" cy="3.800" rx="14" ry="3.800" fill="#aab4bc"/><path d="M0 7.300c2 3.300 26 3.300 28 0v4.200c-2 3.300-26 3.300-28 0zM0 14.700c2 3.300 26 3.300 28 0v4.200c-2 3.300-26 3.300-28 0zM0 22.100c2 3.300 26 3.300 28 0v4.200c-2 3.300-26 3.300-28 0z" fill="#aab4bc"/><rect x="11" y="14.600" width="19.500" height="15.400" fill="#fff"/><rect x="12.300" y="15.800" width="18.200" height="14.200" fill="#97a4ad"/><rect x="13.700" y="17.200" width="15.400" height="2.600" fill="#c9d1d6"/><path d="M13.700 21.200h4.600v3h-4.600zM19.700 21.200h9.400v3h-9.400zM13.700 25.600h4.600v3h-4.600zM19.700 25.600h9.400v3h-9.400z" fill="#e6eaed"/></svg>
<div style="left:159.00px;top:563.80px;height:35px;line-height:35px;font-size:25px;color:#000;white-space:pre;letter-spacing:0.75px;">Task</div>
<div style="left:231.50px;top:563.80px;height:35px;line-height:35px;font-size:25px;color:#999;white-space:pre;letter-spacing:1.00px;">(com.example.demo.entities)</div>
<svg style="left:124.5px;top:290.85px;" width="12" height="19.5" viewBox="0 0 12 19.5"><path d="M2 2l8 7.75l-8 7.75" fill="none" stroke="#7a7a7a" stroke-width="2.6"/></svg>
<svg style="left:160px;top:289.6px;" width="25" height="22" viewBox="0 0 25 22"><path d="M0 11h15M9.500 4.500l6.500 6.500l-6.500 6.500" fill="none" stroke="#2e2b8c" stroke-width="3"/><rect x="19.500" y="0" width="4.200" height="22" fill="#2e2b8c"/></svg>
<div style="left:195.00px;top:283.80px;height:35px;line-height:35px;font-size:25px;color:#000;white-space:pre;letter-spacing:0.62px;">Refers to</div>
<svg style="left:160px;top:329.6px;" width="25" height="22" viewBox="0 0 25 22"><rect x="0" y="0" width="4.200" height="22" fill="#2e2b8c"/><path d="M7 11h15M16 4.500l6.500 6.500l-6.500 6.500" fill="none" stroke="#2e2b8c" stroke-width="3"/></svg>
<div style="left:195.00px;top:323.80px;height:35px;line-height:35px;font-size:25px;color:#000;white-space:pre;letter-spacing:0.75px;">Referenced by</div>
<svg style="left:157px;top:365.6px;" width="32" height="32" viewBox="0 0 32 32"><path d="M1 14C1 5 9 0 18 1.500c7 7 6 19-3 22.500C7 26 1 21 1 14z" fill="#a8d18c"/><path d="M4 6l18 18" stroke="#fff" stroke-width="1.800"/><rect x="10.500" y="15.500" width="21" height="16" fill="#2e2b8c"/><path d="M13 21.500h16M13 26h16M18.500 19v10.500M24 19v10.500" stroke="#fff" stroke-width="1.700"/></svg>
<div style="left:195.00px;top:363.80px;height:35px;line-height:35px;font-size:25px;color:#000;white-space:pre;letter-spacing:0.86px;">Repositories</div>
<svg style="left:121.25px;top:413.1px;" width="19.5" height="12" viewBox="0 0 19.5 12"><path d="M2 2l7.75 8l7.75 -8" fill="none" stroke="#7a7a7a" stroke-width="2.6"/></svg>
<svg style="left:158px;top:409.6px;" width="22.5" height="19.7" viewBox="0 0 24 21"><path d="M6 0v16" stroke="#6e6e6e" stroke-width="3"/><path d="M0 11.500l6 8l6-8z" fill="#6e6e6e"/><path d="M18 21V5" stroke="#6e6e6e" stroke-width="3"/><path d="M12 9l6-8.500l6 8.500z" fill="#6e6e6e"/></svg>
<div style="left:189.00px;top:403.80px;height:35px;line-height:35px;font-size:25px;color:#000;white-space:pre;letter-spacing:0.78px;">DTO and Projections</div>
<svg style="left:194.2px;top:446.8px;" width="27.6" height="27.6" viewBox="0 0 27.6 27.6"><circle cx="13.8" cy="13.8" r="13.8" fill="#8ac3dc"/><text x="13.8" y="14.100000000000001" text-anchor="middle" dominant-baseline="central" font-family='"Liberation Sans",sans-serif' font-size="17" font-weight="400" fill="#33464f" fill-opacity="0.9">C</text></svg>
<div style="left:231.00px;top:443.80px;height:35px;line-height:35px;font-size:25px;color:#000;white-space:pre;letter-spacing:0.60px;">PetDto</div>
<svg style="left:194.2px;top:486.8px;" width="27.6" height="27.6" viewBox="0 0 27.6 27.6"><circle cx="13.8" cy="13.8" r="13.8" fill="#a8d18c"/><text x="13.8" y="14.100000000000001" text-anchor="middle" dominant-baseline="central" font-family='"DejaVu Sans Mono","Liberation Mono",monospace' font-size="16.5" font-weight="400" fill="#3f5232" fill-opacity="0.9">I</text></svg>
<div style="left:231.00px;top:483.80px;height:35px;line-height:35px;font-size:25px;color:#000;white-space:pre;letter-spacing:0.54px;">PetInfo</div>
<svg style="left:194.2px;top:526.8px;" width="27.6" height="27.6" viewBox="0 0 27.6 27.6"><circle cx="13.8" cy="13.8" r="13.8" fill="#9ad0ea"/><text x="13.8" y="14.3" text-anchor="middle" dominant-baseline="central" font-family='"Liberation Sans",sans-serif' font-size="15.5" font-weight="700" fill="#33464f" fill-opacity="0.85">R</text></svg>
<svg style="left:191px;top:523.6px;" width="14" height="12" viewBox="0 0 14 12"><ellipse cx="6" cy="5.5" rx="5.6" ry="3" transform="rotate(-38 6 5.5)" fill="#9aa3ab"/><path d="M8 7l4 3.5" stroke="#9aa3ab" stroke-width="1.6"/></svg>
<div style="left:231.00px;top:523.80px;height:35px;line-height:35px;font-size:25px;color:#000;white-space:pre;letter-spacing:0.62px;">PetRecord</div>
<svg style="left:13.25px;top:613.1px;" width="19.5" height="12" viewBox="0 0 19.5 12"><path d="M2 2l7.75 8l7.75 -8" fill="none" stroke="#7a7a7a" stroke-width="2.6"/></svg>
<svg style="left:51px;top:606.1px;" width="28" height="28" viewBox="0 0 28 28"><path d="M0 5v18c2 4 24 4 26 0V5z" fill="#aeb8c0"/><ellipse cx="13" cy="5" rx="13" ry="4.600" fill="#cdd5da" stroke="#aeb8c0" stroke-width="1"/></svg>
<div style="left:86.80px;top:603.80px;height:35px;line-height:35px;font-size:25px;color:#000;white-space:pre;">DB connections</div>
</div>
<svg style="left:62px;top:1527.5px;" width="18" height="23" viewBox="0 0 18 23"><circle cx="4" cy="3.500" r="3.300" fill="#6e6e6e"/><circle cx="4" cy="19.500" r="3.300" fill="#6e6e6e"/><circle cx="14" cy="6.500" r="3.300" fill="#6e6e6e"/><path d="M4 3.500v16M14 6.500c0 6-10 5-10 10" fill="none" stroke="#6e6e6e" stroke-width="2.600"/></svg>
<div style="left:92.30px;top:1524.30px;height:29px;line-height:29px;font-size:21px;color:#000;white-space:pre;letter-spacing:0.72px;">Git</div>
<svg style="left:162px;top:1526.5px;" width="27" height="26" viewBox="0 0 27 26"><circle cx="16" cy="5" r="4.800" fill="#6e6e6e"/><circle cx="5" cy="20.500" r="4.800" fill="#6e6e6e"/><circle cx="21.500" cy="20.500" r="4.800" fill="#6e6e6e"/><path d="M16 5L5 20.500M16 5l5.500 15.500" stroke="#6e6e6e" stroke-width="2.600"/></svg>
<div style="left:196.80px;top:1524.30px;height:29px;line-height:29px;font-size:21px;color:#000;white-space:pre;letter-spacing:1.09px;">Endpoints</div>
<svg style="left:342px;top:1526.5px;" width="27" height="26" viewBox="0 0 27 26"><circle cx="11" cy="11" r="9.500" fill="none" stroke="#6e6e6e" stroke-width="2.600"/><path d="M11 5v6.500l-3.500 3" fill="none" stroke="#6e6e6e" stroke-width="2.200"/><path d="M12.500 9l14 8.500l-14 8.500z" fill="#6e6e6e" stroke="#f2f2f2" stroke-width="1.800"/></svg>
<div style="left:376.80px;top:1524.30px;height:29px;line-height:29px;font-size:21px;color:#000;white-space:pre;letter-spacing:1.00px;">Profiler</div>
<svg style="left:494.5px;top:1527px;" width="26" height="25" viewBox="0 0 26 25"><path d="M13 0l13 6.500l-13 6.500L0 6.500z" fill="#6e6e6e"/><path d="M1.500 12.500l11.500 5.800l11.500-5.800M1.500 18l11.500 5.800l11.500-5.800" fill="none" stroke="#6e6e6e" stroke-width="2.400"/></svg>
<div style="left:528.50px;top:1524.30px;height:29px;line-height:29px;font-size:21px;color:#000;white-space:pre;letter-spacing:1.25px;">Dependencies</div>
<svg style="left:725px;top:1531px;" width="22" height="17" viewBox="0 0 22 17"><path d="M0 1.700h4M7 1.700h15M0 8.500h4M7 8.500h15M0 15.300h4M7 15.300h15" stroke="#6e6e6e" stroke-width="3.200"/></svg>
<div style="left:756.50px;top:1524.30px;height:29px;line-height:29px;font-size:21px;color:#000;white-space:pre;letter-spacing:0.42px;">TODO</div>
<svg style="left:862px;top:1528.5px;" width="22" height="22" viewBox="0 0 22 22"><circle cx="11" cy="11" r="10.500" fill="#6e6e6e"/><path d="M11 4.500v8.500M11 15v3" stroke="#f2f2f2" stroke-width="3"/></svg>
<div style="left:893.80px;top:1524.30px;height:29px;line-height:29px;font-size:21px;color:#000;white-space:pre;letter-spacing:1.25px;">Problems</div>
<svg style="left:1034px;top:1527.5px;" width="26" height="23" viewBox="0 0 26 23"><path d="M24.500 0C27 12 22 22 11 22.500C4.500 22.800 0 19.500 0.500 14C1 7.500 10 3.500 24.500 0z" fill="#6e6e6e"/><path d="M1 22.500C7 20 15 16 21 9" stroke="#f2f2f2" stroke-width="1.400" fill="none"/></svg>
<div style="left:1068.50px;top:1524.30px;height:29px;line-height:29px;font-size:21px;color:#000;white-space:pre;letter-spacing:1.15px;">Spring</div>
<svg style="left:1178px;top:1529px;" width="22" height="20" viewBox="0 0 22 20"><rect x="0" y="0" width="22" height="20" fill="#6e6e6e"/><path d="M4 5l5 4.500l-5 4.500M11 15h7" fill="none" stroke="#f2f2f2" stroke-width="2.200"/></svg>
<div style="left:1211.00px;top:1524.30px;height:29px;line-height:29px;font-size:21px;color:#000;white-space:pre;letter-spacing:0.89px;">Terminal</div>
<svg style="left:1345px;top:1527px;" width="26" height="25" viewBox="0 0 26 25"><ellipse cx="12" cy="4" rx="11.500" ry="4" fill="#6e6e6e"/><path d="M0.500 7c2 3.500 21 3.500 23 0v4c-2 3.500-21 3.500-23 0zM0.500 13c2 3.500 21 3.500 23 0v4c-2 3.500-21 3.500-23 0z" fill="#6e6e6e"/><path d="M9 19.500l5 4.500l10-9.500" fill="none" stroke="#f2f2f2" stroke-width="5"/><path d="M9 19.500l5 4.500l10-9.500" fill="none" stroke="#6e6e6e" stroke-width="2.600"/></svg>
<div style="left:1378.80px;top:1524.30px;height:29px;line-height:29px;font-size:21px;color:#000;white-space:pre;letter-spacing:1.02px;">Database Changes</div>
<svg style="left:1624px;top:1527px;" width="27" height="25" viewBox="0 0 27 25"><path d="M7 0.500h13l6.500 12l-6.500 12h-13l-6.500-12z" fill="#6e6e6e"/><path d="M10.500 6.500l10 6l-10 6z" fill="#f2f2f2"/></svg>
<div style="left:1658.10px;top:1524.30px;height:29px;line-height:29px;font-size:21px;color:#000;white-space:pre;letter-spacing:1.11px;">Services</div>
<svg style="left:12px;top:1568px;" width="24" height="24" viewBox="0 0 24 24"><path d="M6 1h17v17H6z" fill="none" stroke="#6e6e6e" stroke-width="2"/><path d="M1 6v17h17" fill="none" stroke="#6e6e6e" stroke-width="2"/></svg>
<div style="left:62.50px;top:1566.40px;height:29px;line-height:29px;font-size:21px;color:#000;white-space:pre;letter-spacing:1.23px;">1 file committed: Init Commit (moments ago)</div>
<svg style="left:1953px;top:1567px;" width="34" height="28" viewBox="0 0 34 28"><path d="M7 20a7 7 0 0 1 1-14a9.500 9.500 0 0 1 18 2a6 6 0 0 1 0.500 12z" fill="#6e6e6e"/><text x="16" y="17.500" text-anchor="middle" font-family='"Liberation Sans",sans-serif' font-weight="700" font-size="15" fill="#f2f2f2">?</text><circle cx="26.500" cy="21" r="5.500" fill="#6e6e6e" stroke="#f2f2f2" stroke-width="1.500"/><circle cx="26.500" cy="21" r="2" fill="#f2f2f2"/></svg>
<div style="left:2007.50px;top:1566.40px;height:29px;line-height:29px;font-size:21px;color:#000;white-space:pre;letter-spacing:0.50px;">21:36</div>
<div style="left:2088.50px;top:1566.40px;height:29px;line-height:29px;font-size:21px;color:#000;white-space:pre;letter-spacing:-0.50px;">LF</div>
<div style="left:2138.50px;top:1566.40px;height:29px;line-height:29px;font-size:21px;color:#000;white-space:pre;letter-spacing:1.88px;">UTF-8</div>
<div style="left:2230.50px;top:1566.40px;height:29px;line-height:29px;font-size:21px;color:#000;white-space:pre;letter-spacing:1.29px;">4 spaces</div>
<svg style="left:2333px;top:1566px;" width="25" height="27" viewBox="0 0 25 27"><path d="M8.500 0H17.500V12H12V23.500H0V8.500z" fill="#6e6e6e"/><path d="M0 7L7 0V7z" fill="#a9a9a9"/><circle cx="17" cy="19" r="7.600" fill="#f2f2f2"/><g transform="translate(17 19)" fill="#6e6e6e"><rect x="-1.700" y="-7" width="3.400" height="14"/><rect x="-1.700" y="-7" width="3.400" height="14" transform="rotate(45)"/><rect x="-1.700" y="-7" width="3.400" height="14" transform="rotate(90)"/><rect x="-1.700" y="-7" width="3.400" height="14" transform="rotate(135)"/><circle r="5"/><circle r="2.200" fill="#f2f2f2"/></g></svg>
<svg style="left:2388px;top:1567px;" width="20" height="27" viewBox="0 0 20 27"><circle cx="4" cy="4" r="3.300" fill="#6e6e6e"/><circle cx="4" cy="22.500" r="3.300" fill="#6e6e6e"/><circle cx="15.500" cy="7" r="3.300" fill="#6e6e6e"/><path d="M4 4v18.500M15.500 7c0 7-11.500 6-11.500 11.500" fill="none" stroke="#6e6e6e" stroke-width="2.600"/></svg>
<div style="left:2418.50px;top:1566.40px;height:29px;line-height:29px;font-size:21px;color:#000;white-space:pre;letter-spacing:1.45px;">master</div>
<svg style="left:2509px;top:1568px;" width="26" height="24" viewBox="0 0 26 24"><rect x="9" y="9.500" width="16" height="13" fill="#6e6e6e"/><path d="M2 10V6.500a4.500 4.500 0 0 1 9 0V10" fill="none" stroke="#6e6e6e" stroke-width="2.600"/></svg>
<div style="left:151px;top:1292px;width:350px;height:178px;background:transparent;border:10px solid #f09637;"></div>
<div style="left:499.90px;top:1231.70px;height:70px;line-height:70px;font-size:50px;color:#f09637;white-space:pre;font-weight:700;transform:scaleX(1.08);transform-origin:0.00px 50%;">1</div>
<div style="left:500px;top:1278.5px;width:12.55px;height:7px;background:#fff;"></div>
<div style="left:520.05px;top:1278.5px;width:11px;height:7px;background:#fff;"></div>
<div style="left:1968px;top:161.5px;width:480.5px;height:243px;background:#fff;box-shadow:0 7px 20px 1px rgba(0,0,0,0.210),0 0 2px rgba(0,0,0,0.400);"></div>
<div style="left:1968px;top:170px;width:480.5px;height:40px;background:#3a75ba;"></div>
<svg style="left:1977px;top:126px;" width="22.5" height="19.7" viewBox="0 0 24 21"><path d="M6 0v16" stroke="#6e6e6e" stroke-width="3"/><path d="M0 11.500l6 8l6-8z" fill="#6e6e6e"/><path d="M18 21V5" stroke="#6e6e6e" stroke-width="3"/><path d="M12 9l6-8.500l6 8.500z" fill="#6e6e6e"/></svg>
<svg style="left:1996.25px;top:149.9px;" width="11.5" height="5.8" viewBox="0 0 11.5 5.8"><path d="M0 0h11.5l-5.75 5.8z" fill="#2b2b2b"/></svg>
<svg style="left:1994.2px;top:176.2px;" width="27.6" height="27.6" viewBox="0 0 27.6 27.6"><circle cx="13.8" cy="13.8" r="13.8" fill="#74b5d2"/><text x="13.8" y="14.100000000000001" text-anchor="middle" dominant-baseline="central" font-family='"Liberation Sans",sans-serif' font-size="17" font-weight="400" fill="#33464f" fill-opacity="0.9">C</text></svg>
<div style="left:2036.30px;top:173.10px;height:35px;line-height:35px;font-size:25px;color:#fff;white-space:pre;letter-spacing:0.60px;">PetDto</div>
<svg style="left:1994.2px;top:215.8px;" width="27.6" height="27.6" viewBox="0 0 27.6 27.6"><circle cx="13.8" cy="13.8" r="13.8" fill="#a8d18c"/><text x="13.8" y="14.100000000000001" text-anchor="middle" dominant-baseline="central" font-family='"DejaVu Sans Mono","Liberation Mono",monospace' font-size="16.5" font-weight="400" fill="#3f5232" fill-opacity="0.9">I</text></svg>
<div style="left:2036.30px;top:212.80px;height:35px;line-height:35px;font-size:25px;color:#000;white-space:pre;letter-spacing:0.54px;">PetInfo</div>
<svg style="left:1994.2px;top:255.5px;" width="27.6" height="27.6" viewBox="0 0 27.6 27.6"><circle cx="13.8" cy="13.8" r="13.8" fill="#9ad0ea"/><text x="13.8" y="14.3" text-anchor="middle" dominant-baseline="central" font-family='"Liberation Sans",sans-serif' font-size="15.5" font-weight="700" fill="#33464f" fill-opacity="0.85">R</text></svg>
<svg style="left:1991px;top:252.3px;" width="14" height="12" viewBox="0 0 14 12"><ellipse cx="6" cy="5.5" rx="5.6" ry="3" transform="rotate(-38 6 5.5)" fill="#9aa3ab"/><path d="M8 7l4 3.5" stroke="#9aa3ab" stroke-width="1.6"/></svg>
<div style="left:2036.30px;top:252.40px;height:35px;line-height:35px;font-size:25px;color:#000;white-space:pre;letter-spacing:0.62px;">PetRecord</div>
<div style="left:1974px;top:301.7px;width:468.5px;height:2px;background:#d9d9d9;"></div>
<svg style="left:1998px;top:325.5px;" width="20" height="20" viewBox="0 0 20 20"><path d="M10 0v20M0 10h20" stroke="#6e6e6e" stroke-width="3"/></svg>
<div style="left:2036.30px;top:318.50px;height:35px;line-height:35px;font-size:25px;color:#000;white-space:pre;letter-spacing:0.36px;">Create DTO</div>
<svg style="left:1998px;top:365px;" width="20" height="20" viewBox="0 0 20 20"><path d="M10 0v20M0 10h20" stroke="#6e6e6e" stroke-width="3"/></svg>
<div style="left:2036.30px;top:358.20px;height:35px;line-height:35px;font-size:25px;color:#000;white-space:pre;letter-spacing:0.86px;">Create Spring Data Projection</div>
<div style="left:1949px;top:108px;width:524px;height:326px;background:transparent;border:10px solid #f09637;"></div>
<div style="left:2463.90px;top:47.90px;height:70px;line-height:70px;font-size:50px;color:#f09637;white-space:pre;font-weight:700;transform:scaleX(1.08);transform-origin:0.00px 50%;">1</div>
<div style="left:2464px;top:94.7px;width:12.6px;height:7px;background:#f2f2f2;"></div>
<div style="left:2484.05px;top:94.7px;width:11px;height:7px;background:#f2f2f2;"></div>
<svg style="left:2490.5px;top:89.5px;" width="7" height="7" viewBox="0 0 7 7"><circle cx="3.500" cy="3.500" r="3.200" fill="#6e6e6e"/></svg>
<div style="left:637px;top:414.5px;width:62.5px;height:148px;background:transparent;border:5px solid #8b5cf6;"></div>
<div style="left:696.90px;top:353.20px;height:71px;line-height:71px;font-size:51px;color:#8b5cf6;white-space:pre;font-weight:700;transform:scaleX(0.98);transform-origin:0.00px 50%;">2</div>
<svg style="left:0;top:0" width="2560" height="1600" viewBox="0 0 2560 1600"><path d="M699.0 451.0L1671.0 493.5" stroke="#8b5cf6" stroke-width="5.600"/><polygon points="1695.0,494.5 1668.5,505.9 1669.6,480.9" fill="#8b5cf6"/><path d="M699.0 487.0L1730.5 792.6" stroke="#8b5cf6" stroke-width="5.600"/><polygon points="1753.5,799.4 1725.0,804.0 1732.1,780.0" fill="#8b5cf6"/><path d="M699.0 552.0L1729.9 925.3" stroke="#8b5cf6" stroke-width="5.600"/><polygon points="1752.5,933.5 1723.8,936.4 1732.3,912.9" fill="#8b5cf6"/></svg></body></html>
